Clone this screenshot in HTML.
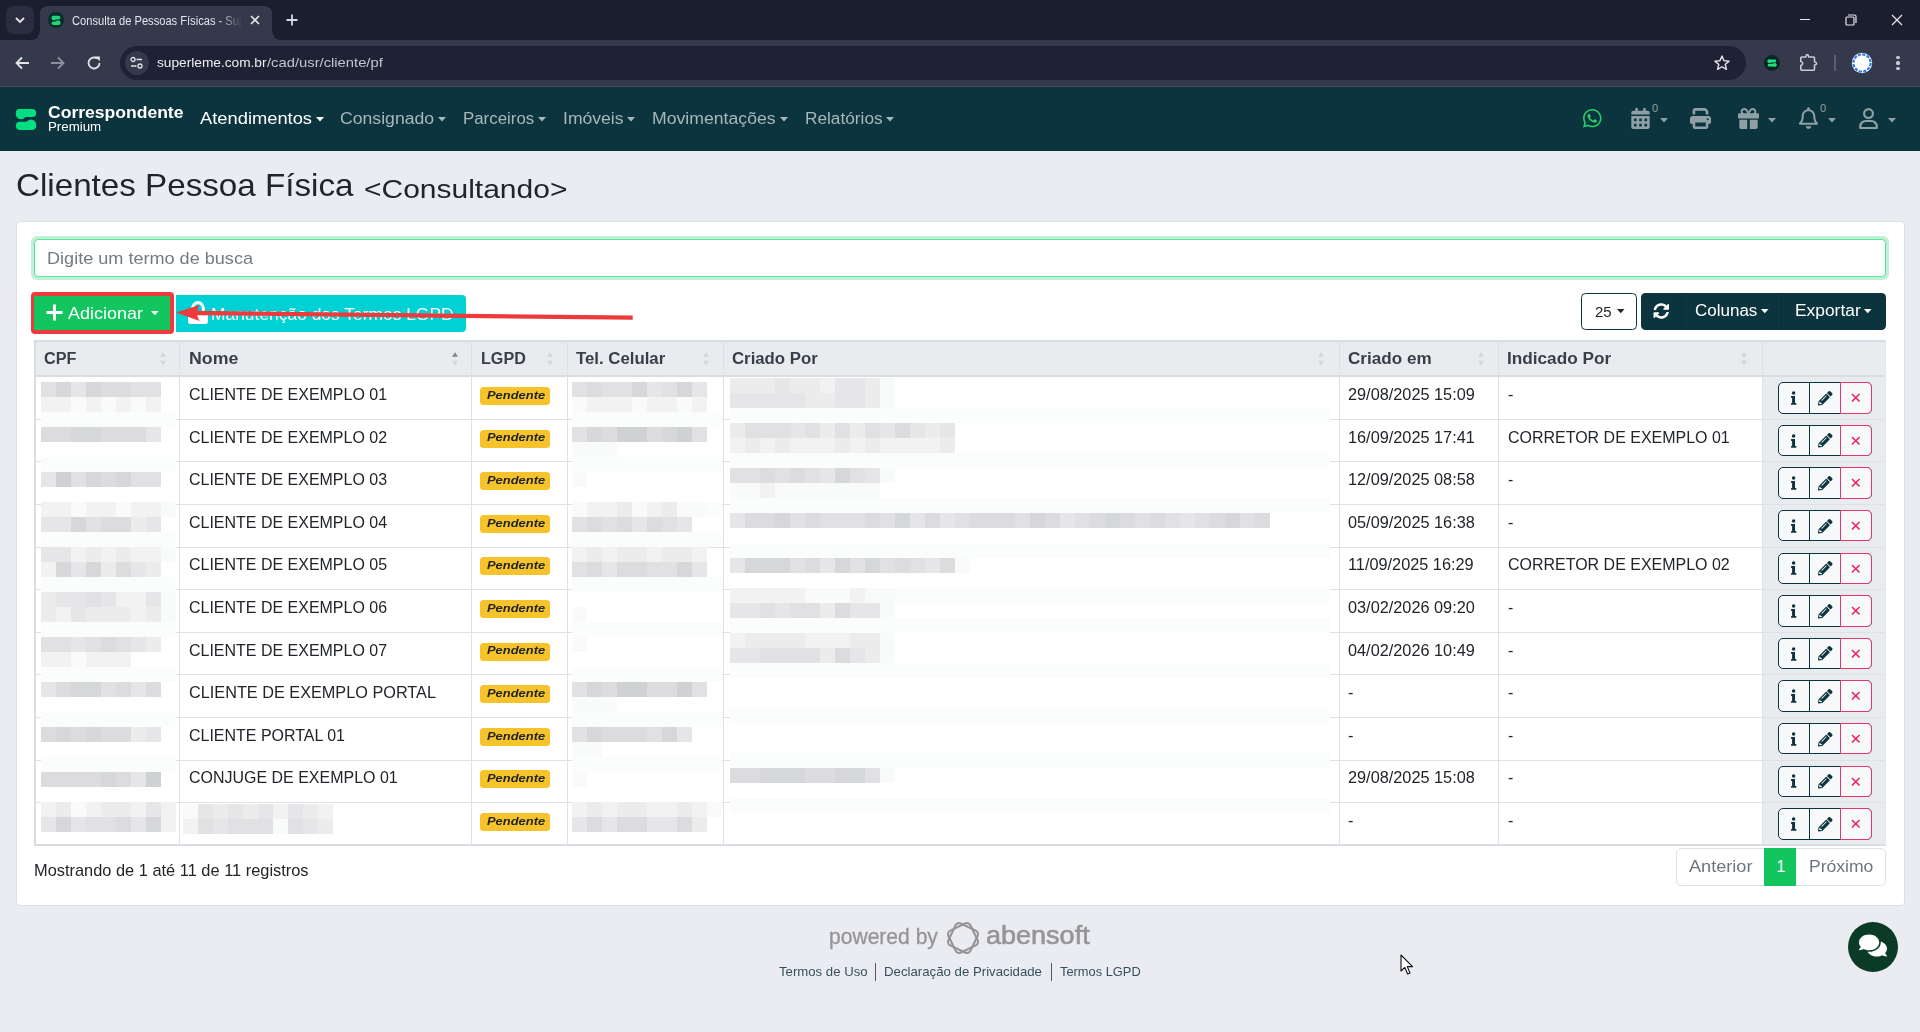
<!DOCTYPE html>
<html><head><meta charset="utf-8"><title>Consulta de Pessoas Físicas</title>
<style>
html,body{margin:0;padding:0;width:1920px;height:1032px;overflow:hidden;background:#ebecf1;font-family:"Liberation Sans",sans-serif;}
.a{position:absolute;box-sizing:border-box;}
.t{position:absolute;white-space:nowrap;transform-origin:0 0;font-family:"Liberation Sans",sans-serif;}
svg.a{overflow:visible}
</style></head><body>
<div class="a" style="left:0.00px;top:0.00px;width:1920.00px;height:40.00px;background:#1b1e2f;"></div>
<div class="a" style="left:0.00px;top:40.00px;width:1920.00px;height:46.00px;background:#35394c;"></div>
<div class="a" style="left:0.00px;top:86.00px;width:1920.00px;height:1.00px;background:#4a4b57;"></div>
<svg class="a" style="left:30px;top:0px" width="260" height="41" viewBox="0 0 260 41"><path d="M0 40 Q10 40 10 30 L10 14 Q10 6 18 6 L234 6 Q242 6 242 14 L242 30 Q242 40 252 40 Z" fill="#35394c"/></svg>
<div class="a" style="left:6.00px;top:6.00px;width:28.00px;height:28.00px;background:#2a2d3f;border-radius:8px;"></div>
<svg class="a" style="left:14px;top:15px" width="12" height="10" viewBox="0 0 12 10"><path d="M2 3 L6 7 L10 3" stroke="#e6e6ea" stroke-width="1.8" fill="none"/></svg>
<svg class="a" style="left:48px;top:12px" width="16" height="16" viewBox="0 0 16 16"><circle cx="8" cy="8" r="8" fill="#0c2e2a"/><rect x="3.6" y="3.8" width="8.8" height="3.6" rx="1.8" fill="#22d37a"/><circle cx="5.9" cy="6" r="2.3" fill="#22d37a"/><rect x="3.6" y="9.4" width="8.8" height="3.6" rx="1.8" fill="#22d37a"/><circle cx="10.1" cy="10.6" r="2.3" fill="#22d37a"/></svg>
<div class="a" style="left:72px;top:10px;width:172px;height:20px;overflow:hidden;-webkit-mask-image:linear-gradient(90deg,#000 146px,transparent 170px)"><span id="tabtitle" class="t" style="left:0;top:3.8px;font-size:12.5px;line-height:14px;color:#e4e5ea;transform:scaleX(0.89)">Consulta de Pessoas Físicas - Superleme</span></div>
<svg class="a" style="left:250px;top:15px" width="10" height="10" viewBox="0 0 10 10"><path d="M1 1 L9 9 M9 1 L1 9" stroke="#e6e6ea" stroke-width="1.6"/></svg>
<svg class="a" style="left:286px;top:14px" width="12" height="12" viewBox="0 0 12 12"><path d="M6 0.5 V11.5 M0.5 6 H11.5" stroke="#d5d8e4" stroke-width="1.8"/></svg>
<div class="a" style="left:1800.00px;top:19.00px;width:10.00px;height:1.20px;background:#e6e6ea;"></div>
<svg class="a" style="left:1845px;top:14px" width="12" height="12" viewBox="0 0 12 12"><rect x="1" y="3" width="8" height="8" rx="1" stroke="#e6e6ea" stroke-width="1.2" fill="none"/><path d="M3 1 H9.5 a1.5 1.5 0 0 1 1.5 1.5 V9" stroke="#e6e6ea" stroke-width="1.2" fill="none"/></svg>
<svg class="a" style="left:1891px;top:14px" width="12" height="12" viewBox="0 0 12 12"><path d="M1 1 L11 11 M11 1 L1 11" stroke="#e6e6ea" stroke-width="1.3"/></svg>
<svg class="a" style="left:14px;top:56px" width="16" height="14" viewBox="0 0 16 14"><path d="M15 7 H2.5 M8 1.5 L2.5 7 L8 12.5" stroke="#e3e3e8" stroke-width="1.8" fill="none"/></svg>
<svg class="a" style="left:50px;top:56px" width="16" height="14" viewBox="0 0 16 14"><path d="M1 7 H13.5 M8 1.5 L13.5 7 L8 12.5" stroke="#8d8f9c" stroke-width="1.8" fill="none"/></svg>
<svg class="a" style="left:86px;top:55px" width="16" height="16" viewBox="0 0 16 16"><path d="M13.5 8 A5.5 5.5 0 1 1 11.3 3.6" stroke="#e3e3e8" stroke-width="1.8" fill="none"/><path d="M9 1.5 H13.8 V6.3 Z" fill="#e3e3e8"/></svg>
<div class="a" style="left:120.00px;top:46.00px;width:1626.00px;height:34.00px;background:#1f2234;border-radius:17px;"></div>
<div class="a" style="left:125.00px;top:51.00px;width:24.00px;height:24.00px;background:#35394c;border-radius:12px;"></div>
<svg class="a" style="left:130px;top:56px" width="14" height="14" viewBox="0 0 14 14"><circle cx="3" cy="3.5" r="2" stroke="#e3e3e8" stroke-width="1.3" fill="none"/><path d="M6.5 3.5 H12 M1 10 H6.5" stroke="#e3e3e8" stroke-width="1.4"/><circle cx="10" cy="10" r="2" stroke="#e3e3e8" stroke-width="1.3" fill="none"/></svg>
<span id="t0" class="t" style="left:157.00px;top:56.47px;font-size:13.50px;line-height:13.50px;color:#eceef2;font-weight:400;transform:scaleX(1.0139);">superleme.com.br</span>
<span id="t1" class="t" style="left:267.00px;top:56.47px;font-size:13.50px;line-height:13.50px;color:#c3c6d0;font-weight:400;transform:scaleX(1.0943);">/cad/usr/cliente/pf</span>
<svg class="a" style="left:1713px;top:54px" width="18" height="18" viewBox="0 0 24 24"><path d="M12 2.8 L14.7 9 L21.4 9.5 L16.3 13.9 L17.9 20.5 L12 17 L6.1 20.5 L7.7 13.9 L2.6 9.5 L9.3 9 Z" stroke="#e3e3e8" stroke-width="1.9" fill="none" stroke-linejoin="round"/></svg>
<svg class="a" style="left:1764px;top:55px" width="16" height="16" viewBox="0 0 16 16"><circle cx="8" cy="8" r="7.9" fill="#0a2424"/><rect x="3.6" y="4.6" width="8.6" height="2.8" rx="1.4" fill="#1ee07e"/><circle cx="5.2" cy="6.2" r="1.8" fill="#1ee07e"/><rect x="3.8" y="8.8" width="8.6" height="2.8" rx="1.4" fill="#1ee07e"/><circle cx="10.8" cy="9.9" r="1.8" fill="#1ee07e"/></svg>
<svg class="a" style="left:1799px;top:53px" width="20" height="20" viewBox="0 0 20 20"><path d="M2.8 4 H6.8 Q7.2 1.6 8.3 1.6 Q9.4 1.6 9.8 4 H14.5 a1 1 0 0 1 1 1 V8.8 Q17.6 9.3 17.6 10.4 Q17.6 11.5 15.5 12 V16.2 a1 1 0 0 1 -1 1 H2.8 a1 1 0 0 1 -1 -1 V12.4 Q3.8 11.7 3.8 10.4 Q3.8 9.1 1.8 8.4 V5 a1 1 0 0 1 1 -1 Z" stroke="#c8cad8" stroke-width="1.6" fill="none" stroke-linejoin="round"/></svg>
<div class="a" style="left:1834.30px;top:55.00px;width:1.40px;height:16.00px;background:#5b5e70;"></div>
<svg class="a" style="left:1851px;top:52px" width="22" height="22" viewBox="0 0 22 22"><circle cx="11" cy="11" r="10.2" fill="#ffffff"/><circle cx="11" cy="11" r="8.6" stroke="#2f7de6" stroke-width="2.2" stroke-dasharray="3.2 1.3" fill="none"/><circle cx="11" cy="11" r="6.4" fill="#ffffff"/></svg>
<div class="a" style="left:1896.40px;top:55.80px;width:3.20px;height:3.20px;background:#c8cad8;border-radius:50%;"></div>
<div class="a" style="left:1896.40px;top:61.40px;width:3.20px;height:3.20px;background:#c8cad8;border-radius:50%;"></div>
<div class="a" style="left:1896.40px;top:67.00px;width:3.20px;height:3.20px;background:#c8cad8;border-radius:50%;"></div>
<div class="a" style="left:0.00px;top:87.00px;width:1920.00px;height:64.00px;background:#0c343e;"></div>
<svg class="a" style="left:0px;top:100px" width="50" height="40" viewBox="0 100 50 40"><rect x="15.8" y="108.9" width="20.4" height="8.2" rx="4.1" fill="#03de80"/><circle cx="21" cy="114" r="5.2" fill="#03de80"/><rect x="15.8" y="121.7" width="20.4" height="8.2" rx="4.1" fill="#03de80"/><circle cx="31" cy="124.8" r="5.2" fill="#03de80"/></svg>
<span id="t2" class="t" style="left:48.00px;top:104.22px;font-size:16.50px;line-height:16.50px;color:#ffffff;font-weight:700;transform:scaleX(1.0630);">Correspondente</span>
<span id="t3" class="t" style="left:48.00px;top:120.96px;font-size:12.80px;line-height:12.80px;color:#ffffff;font-weight:400;transform:scaleX(1.0392);">Premium</span>
<span id="t4" class="t" style="left:199.50px;top:111.22px;font-size:15.80px;line-height:15.80px;color:#ffffff;font-weight:400;transform:scaleX(1.1598);">Atendimentos</span>
<svg class="a" style="left:315.70px;top:117.00px" width="8.00" height="4.50" viewBox="0 0 8 4.5"><path d="M0 0H8L4 4.5Z" fill="#ffffff"/></svg>
<span id="t5" class="t" style="left:340.00px;top:111.22px;font-size:15.80px;line-height:15.80px;color:#a7b7ba;font-weight:400;transform:scaleX(1.1161);">Consignado</span>
<svg class="a" style="left:437.50px;top:117.00px" width="8.00" height="4.50" viewBox="0 0 8 4.5"><path d="M0 0H8L4 4.5Z" fill="#a7b7ba"/></svg>
<span id="t6" class="t" style="left:463.00px;top:111.22px;font-size:15.80px;line-height:15.80px;color:#a7b7ba;font-weight:400;transform:scaleX(1.0672);">Parceiros</span>
<svg class="a" style="left:538.00px;top:117.00px" width="8.00" height="4.50" viewBox="0 0 8 4.5"><path d="M0 0H8L4 4.5Z" fill="#a7b7ba"/></svg>
<span id="t7" class="t" style="left:563.00px;top:111.22px;font-size:15.80px;line-height:15.80px;color:#a7b7ba;font-weight:400;transform:scaleX(1.1111);">Imóveis</span>
<svg class="a" style="left:627.00px;top:117.00px" width="8.00" height="4.50" viewBox="0 0 8 4.5"><path d="M0 0H8L4 4.5Z" fill="#a7b7ba"/></svg>
<span id="t8" class="t" style="left:651.75px;top:111.22px;font-size:15.80px;line-height:15.80px;color:#a7b7ba;font-weight:400;transform:scaleX(1.1171);">Movimentações</span>
<svg class="a" style="left:779.50px;top:117.00px" width="8.00" height="4.50" viewBox="0 0 8 4.5"><path d="M0 0H8L4 4.5Z" fill="#a7b7ba"/></svg>
<span id="t9" class="t" style="left:804.50px;top:111.22px;font-size:15.80px;line-height:15.80px;color:#a7b7ba;font-weight:400;transform:scaleX(1.0915);">Relatórios</span>
<svg class="a" style="left:885.50px;top:117.00px" width="8.00" height="4.50" viewBox="0 0 8 4.5"><path d="M0 0H8L4 4.5Z" fill="#a7b7ba"/></svg>
<svg class="a" style="left:1583px;top:109px" width="18.5" height="18.5" viewBox="0 0 448 448"><path fill="#25d366" d="M380.9 65.1C339 23.1 283.2 0 223.9 0 101.5 0 1.9 99.6 1.9 222c0 39.1 10.2 77.3 29.6 111L0 448l117.7-30.9c32.4 17.7 68.9 27 106.1 27h.1c122.3 0 224.1-99.6 224.1-222 0-59.3-25.2-115-67.1-157zm-157 341.6c-33.2 0-65.7-8.9-94-25.7l-6.7-4-69.8 18.3L72 326.2l-4.4-7c-18.5-29.4-28.2-63.3-28.2-98.2 0-101.7 82.8-184.5 184.6-184.5 49.3 0 95.6 19.2 130.4 54.1 34.8 34.9 56.2 81.2 56.1 130.5 0 101.8-84.9 184.6-186.6 184.6zm101.2-138.2c-5.5-2.8-32.8-16.2-37.9-18-5.1-1.9-8.8-2.8-12.5 2.8-3.7 5.6-14.3 18-17.6 21.8-3.2 3.7-6.5 4.2-12 1.4-32.6-16.3-54-29.1-75.5-66-5.7-9.8 5.7-9.1 16.3-30.3 1.8-3.7.9-6.9-.5-9.7-1.4-2.8-12.5-30.1-17.1-41.2-4.5-10.8-9.1-9.3-12.5-9.5-3.2-.2-6.9-.2-10.6-.2-3.7 0-9.7 1.4-14.8 6.9-5.1 5.6-19.4 19-19.4 46.3 0 27.3 19.9 53.7 22.6 57.4 2.8 3.7 39.1 59.7 94.8 83.8 35.2 15.2 49 16.5 66.6 13.9 10.7-1.6 32.8-13.4 37.4-26.4 4.6-13 4.6-24.1 3.2-26.4-1.3-2.5-5-3.9-10.5-6.6z"/></svg>
<svg class="a" style="left:1631px;top:108px" width="19" height="21" viewBox="0 0 448 512"><path fill="#8fa0a4" d="M0 464c0 26.5 21.5 48 48 48h352c26.5 0 48-21.5 48-48V192H0v272zm320-196c0-6.6 5.4-12 12-12h40c6.6 0 12 5.4 12 12v40c0 6.6-5.4 12-12 12h-40c-6.6 0-12-5.4-12-12v-40zm0 128c0-6.6 5.4-12 12-12h40c6.6 0 12 5.4 12 12v40c0 6.6-5.4 12-12 12h-40c-6.6 0-12-5.4-12-12v-40zM192 268c0-6.6 5.4-12 12-12h40c6.6 0 12 5.4 12 12v40c0 6.6-5.4 12-12 12h-40c-6.6 0-12-5.4-12-12v-40zm0 128c0-6.6 5.4-12 12-12h40c6.6 0 12 5.4 12 12v40c0 6.6-5.4 12-12 12h-40c-6.6 0-12-5.4-12-12v-40zM64 268c0-6.6 5.4-12 12-12h40c6.6 0 12 5.4 12 12v40c0 6.6-5.4 12-12 12H76c-6.6 0-12-5.4-12-12v-40zm0 128c0-6.6 5.4-12 12-12h40c6.6 0 12 5.4 12 12v40c0 6.6-5.4 12-12 12H76c-6.6 0-12-5.4-12-12v-40zM400 64h-48V16c0-8.8-7.2-16-16-16h-32c-8.8 0-16 7.2-16 16v48H160V16c0-8.8-7.2-16-16-16h-32c-8.8 0-16 7.2-16 16v48H48C21.5 64 0 85.5 0 112v48h448v-48c0-26.5-21.5-48-48-48z"/></svg>
<span id="t10" class="t" style="left:1652.00px;top:103.18px;font-size:11.00px;line-height:11.00px;color:#8fa0a4;font-weight:400;">0</span>
<svg class="a" style="left:1660.00px;top:118.20px" width="8.00" height="4.50" viewBox="0 0 8 4.5"><path d="M0 0H8L4 4.5Z" fill="#8fa0a4"/></svg>
<svg class="a" style="left:1689.5px;top:108px" width="21" height="21" viewBox="0 0 512 512"><path fill="#8fa0a4" d="M128 0C92.7 0 64 28.7 64 64v96h64V64H354.7L384 93.3V160h64V93.3c0-17-6.7-33.3-18.7-45.3L400 18.7C388 6.7 371.7 0 354.7 0H128zM384 352v32 64H128V384 368 352H384zm64 32h32c17.7 0 32-14.3 32-32V256c0-35.3-28.7-64-64-64H64c-35.3 0-64 28.7-64 64v96c0 17.700 14.3 32 32 32H64v64c0 35.3 28.7 64 64 64H384c35.3 0 64-28.7 64-64V384zM432 248a24 24 0 1 1 0 48 24 24 0 1 1 0-48z"/></svg>
<svg class="a" style="left:1738px;top:108px" width="21" height="21" viewBox="0 0 512 512"><path fill="#8fa0a4" d="M190.5 68.8L225.3 128H224 152c-22.1 0-40-17.9-40-40s17.9-40 40-40h2.2c14.9 0 28.8 7.9 36.3 20.8zM64 88c0 14.4 3.5 28 9.6 40H32c-17.7 0-32 14.3-32 32v64c0 17.7 14.3 32 32 32H480c17.7 0 32-14.3 32-32V160c0-17.7-14.3-32-32-32H438.4c6.1-12 9.6-25.6 9.6-40c0-48.6-39.4-88-88-88h-2.2c-31.9 0-61.5 16.9-77.7 44.4L256 85.5l-24.1-41C215.700 16.9 186.1 0 154.2 0H152C103.4 0 64 39.4 64 88zm336 0c0 22.1-17.9 40-40 40H288h-1.3l34.8-59.2C329.1 55.9 342.9 48 357.8 48H360c22.1 0 40 17.9 40 40zM32 288V464c0 26.5 21.5 48 48 48H224V288H32zM288 512H432c26.5 0 48-21.5 48-48V288H288V512z"/></svg>
<svg class="a" style="left:1768.40px;top:118.20px" width="8.00" height="4.50" viewBox="0 0 8 4.5"><path d="M0 0H8L4 4.5Z" fill="#8fa0a4"/></svg>
<svg class="a" style="left:1799px;top:107px" width="19" height="22" viewBox="0 0 448 512"><path fill="#8fa0a4" d="M439.39 362.29c-19.32-20.76-55.47-51.99-55.47-154.29 0-77.7-54.48-139.9-127.94-155.16V32c0-17.67-14.32-32-31.98-32s-31.98 14.33-31.98 32v20.84C118.56 68.1 64.08 130.3 64.08 208c0 102.3-36.15 133.53-55.47 154.29-6 6.45-8.66 14.16-8.61 21.71.11 16.4 12.98 32 32.1 32h383.8c19.12 0 32-15.6 32.1-32 .05-7.55-2.61-15.27-8.61-21.71zM67.53 368c21.22-27.97 44.42-74.33 44.53-159.42 0-.2-.06-.38-.06-.58 0-61.86 50.14-112 112-112s112 50.14 112 112c0 .2-.06.38-.06.58.11 85.1 23.31 131.46 44.53 159.42H67.53zM224 512c35.32 0 63.97-28.65 63.97-64H160.03c0 35.35 28.65 64 63.97 64z"/></svg>
<span id="t11" class="t" style="left:1820.00px;top:103.18px;font-size:11.00px;line-height:11.00px;color:#8fa0a4;font-weight:400;">0</span>
<svg class="a" style="left:1828.00px;top:118.20px" width="8.00" height="4.50" viewBox="0 0 8 4.5"><path d="M0 0H8L4 4.5Z" fill="#8fa0a4"/></svg>
<svg class="a" style="left:1858.5px;top:108px" width="19" height="21" viewBox="0 0 19 21"><circle cx="9.5" cy="5.6" r="4.4" stroke="#8fa0a4" stroke-width="2.2" fill="none"/><path d="M1.2 20 V18.5 a5.5 5.5 0 0 1 5.5 -5.5 H12.3 a5.5 5.5 0 0 1 5.5 5.5 V20 Z" stroke="#8fa0a4" stroke-width="2.2" fill="none" stroke-linejoin="round"/></svg>
<svg class="a" style="left:1888.00px;top:118.20px" width="8.00" height="4.50" viewBox="0 0 8 4.5"><path d="M0 0H8L4 4.5Z" fill="#8fa0a4"/></svg>
<span id="t12" class="t" style="left:16.00px;top:169.10px;font-size:32.00px;line-height:32.00px;color:#212529;font-weight:400;transform:scaleX(1.0369);">Clientes Pessoa Física</span>
<span id="t13" class="t" style="left:364.00px;top:175.62px;font-size:26.30px;line-height:26.30px;color:#212529;font-weight:400;transform:scaleX(1.1404);">&lt;Consultando&gt;</span>
<div class="a" style="left:16.00px;top:221.00px;width:1889.00px;height:684.50px;background:#ffffff;border:1px solid #dcdfe4;border-radius:4px;"></div>
<div class="a" style="left:31.00px;top:236.00px;width:1858.00px;height:44.00px;background:#c3efd9;border-radius:6px;"></div>
<div class="a" style="left:34.00px;top:239.00px;width:1852.00px;height:38.00px;background:#ffffff;border:1px solid #50e894;border-radius:4px;"></div>
<span id="t14" class="t" style="left:47.00px;top:249.88px;font-size:16.20px;line-height:16.20px;color:#727a82;font-weight:400;transform:scaleX(1.1168);">Digite um termo de busca</span>
<div class="a" style="left:30.50px;top:291.50px;width:143.00px;height:42.00px;background:#ee3a3d;border-radius:4px;"></div>
<div class="a" style="left:34.00px;top:295.50px;width:136.00px;height:34.50px;background:#12c55f;border-radius:1px;"></div>
<svg class="a" style="left:46px;top:304px" width="17" height="17" viewBox="0 0 17 17"><path d="M8.5 0.5 V16.5 M0.5 8.5 H16.5" stroke="#fff" stroke-width="3"/></svg>
<span id="t15" class="t" style="left:68.40px;top:305.11px;font-size:16.40px;line-height:16.40px;color:#ffffff;font-weight:400;transform:scaleX(1.0971);">Adicionar</span>
<svg class="a" style="left:151.40px;top:311.20px" width="7.60" height="4.30" viewBox="0 0 8 4.5"><path d="M0 0H8L4 4.5Z" fill="#ffffff"/></svg>
<div class="a" style="left:176.00px;top:295.00px;width:289.50px;height:37.00px;background:#00d1d5;border-radius:0 4px 4px 0;"></div>
<svg class="a" style="left:188px;top:300px" width="20" height="25" viewBox="0 0 448 512"><path fill="#fff" d="M400 240h-24v-72C376 75 299 0 224 0S72 75 72 168v32h64v-32c0-48 40-96 88-96s88 48 88 96v72H48c-26.5 0-48 21.5-48 48v176c0 26.5 21.5 48 48 48h352c26.5 0 48-21.5 48-48V288c0-26.5-21.5-48-48-48z"/></svg>
<span id="t16" class="t" style="left:210.80px;top:305.61px;font-size:16.40px;line-height:16.40px;color:#ffffff;font-weight:400;transform:scaleX(1.0623);">Manutenção dos Termos LGPD</span>
<div class="a" style="left:1581.00px;top:293.30px;width:55.50px;height:36.30px;background:#ffffff;border:1px solid #0c343e;border-radius:4.5px;"></div>
<span id="t17" class="t" style="left:1594.50px;top:303.76px;font-size:15.40px;line-height:15.40px;color:#212529;font-weight:400;transform:scaleX(0.9706);">25</span>
<svg class="a" style="left:1617.00px;top:309.20px" width="7.50" height="4.20" viewBox="0 0 8 4.5"><path d="M0 0H8L4 4.5Z" fill="#212529"/></svg>
<div class="a" style="left:1641.00px;top:293.30px;width:244.80px;height:36.30px;background:#0c343e;border-radius:4.5px;"></div>
<div class="a" style="left:1681.00px;top:293.30px;width:1.00px;height:36.30px;background:#0a2e37;"></div>
<div class="a" style="left:1781.40px;top:293.30px;width:1.00px;height:36.30px;background:#0a2e37;"></div>
<svg class="a" style="left:1653px;top:303px" width="16.5" height="16" viewBox="0 0 512 512"><path fill="#fff" d="M370.72 133.28C339.458 104.008 298.888 87.962 255.848 88c-77.458.068-144.328 53.178-162.791 126.85-1.344 5.363-6.122 9.15-11.651 9.15H24.103c-7.498 0-13.194-6.807-11.807-14.176C33.933 94.924 134.813 8 256 8c66.448 0 126.791 26.136 171.315 68.685L463.03 40.97C478.149 25.851 504 36.559 504 57.941V192c0 13.255-10.745 24-24 24H345.941c-21.382 0-32.09-25.851-16.971-40.971l41.75-41.749zM32 296h134.059c21.382 0 32.09 25.851 16.971 40.971l-41.75 41.75c31.262 29.273 71.835 45.319 114.876 45.28 77.418-.07 144.315-53.144 162.787-126.849 1.344-5.363 6.122-9.15 11.651-9.15h57.304c7.498 0 13.194 6.807 11.807 14.176C478.067 417.076 377.187 504 256 504c-66.448 0-126.791-26.136-171.315-68.685L48.97 471.03C33.851 486.149 8 475.441 8 454.059V320c0-13.255 10.745-24 24-24z"/></svg>
<span id="t18" class="t" style="left:1694.60px;top:303.42px;font-size:15.80px;line-height:15.80px;color:#ffffff;font-weight:400;transform:scaleX(1.0759);">Colunas</span>
<svg class="a" style="left:1760.50px;top:309.20px" width="7.50" height="4.20" viewBox="0 0 8 4.5"><path d="M0 0H8L4 4.5Z" fill="#ffffff"/></svg>
<span id="t19" class="t" style="left:1795.00px;top:303.42px;font-size:15.80px;line-height:15.80px;color:#ffffff;font-weight:400;transform:scaleX(1.1000);">Exportar</span>
<svg class="a" style="left:1864.00px;top:309.20px" width="7.50" height="4.20" viewBox="0 0 8 4.5"><path d="M0 0H8L4 4.5Z" fill="#ffffff"/></svg>
<div class="a" style="left:34.00px;top:340.00px;width:1851.60px;height:1.60px;background:#d9dde2;"></div>
<div class="a" style="left:34.00px;top:341.60px;width:1851.60px;height:33.60px;background:#e9ecef;"></div>
<div class="a" style="left:34.00px;top:375.20px;width:1851.60px;height:1.80px;background:#d9dde2;"></div>
<div class="a" style="left:1762.20px;top:377.00px;width:123.40px;height:468.30px;background:#e9ecef;"></div>
<div class="a" style="left:34.00px;top:419.00px;width:1851.60px;height:1.00px;background:#dee2e6;"></div>
<div class="a" style="left:34.00px;top:461.00px;width:1851.60px;height:1.00px;background:#dee2e6;"></div>
<div class="a" style="left:34.00px;top:504.00px;width:1851.60px;height:1.00px;background:#dee2e6;"></div>
<div class="a" style="left:34.00px;top:547.00px;width:1851.60px;height:1.00px;background:#dee2e6;"></div>
<div class="a" style="left:34.00px;top:589.00px;width:1851.60px;height:1.00px;background:#dee2e6;"></div>
<div class="a" style="left:34.00px;top:632.00px;width:1851.60px;height:1.00px;background:#dee2e6;"></div>
<div class="a" style="left:34.00px;top:674.00px;width:1851.60px;height:1.00px;background:#dee2e6;"></div>
<div class="a" style="left:34.00px;top:717.00px;width:1851.60px;height:1.00px;background:#dee2e6;"></div>
<div class="a" style="left:34.00px;top:760.00px;width:1851.60px;height:1.00px;background:#dee2e6;"></div>
<div class="a" style="left:34.00px;top:802.00px;width:1851.60px;height:1.00px;background:#dee2e6;"></div>
<div class="a" style="left:34.00px;top:844.00px;width:1851.60px;height:1.60px;background:#d9dde2;"></div>
<div class="a" style="left:34.00px;top:340.00px;width:1.80px;height:505.60px;background:#d9dde2;"></div>
<div class="a" style="left:178.80px;top:341.60px;width:1.10px;height:503.70px;background:#dee2e6;"></div>
<div class="a" style="left:470.80px;top:341.60px;width:1.10px;height:503.70px;background:#dee2e6;"></div>
<div class="a" style="left:567.00px;top:341.60px;width:1.10px;height:503.70px;background:#dee2e6;"></div>
<div class="a" style="left:723.20px;top:341.60px;width:1.10px;height:503.70px;background:#dee2e6;"></div>
<div class="a" style="left:1338.70px;top:341.60px;width:1.10px;height:503.70px;background:#dee2e6;"></div>
<div class="a" style="left:1497.90px;top:341.60px;width:1.10px;height:503.70px;background:#dee2e6;"></div>
<div class="a" style="left:1761.70px;top:341.60px;width:1.10px;height:503.70px;background:#dee2e6;"></div>
<div class="a" style="left:1884.60px;top:340.00px;width:1.20px;height:505.30px;background:#e3e6ea;"></div>
<span id="t20" class="t" style="left:44.00px;top:350.69px;font-size:15.60px;line-height:15.60px;color:#383f48;font-weight:700;transform:scaleX(1.0387);">CPF</span>
<svg class="a" style="left:160.0px;top:351.8px" width="6" height="14" viewBox="0 0 6 14"><path d="M0 4.8 L3 0.2 L6 4.8Z" fill="#d2d6da"/><path d="M0 8.8 L3 13.3 L6 8.8Z" fill="#d2d6da"/></svg>
<span id="t21" class="t" style="left:188.80px;top:350.69px;font-size:15.60px;line-height:15.60px;color:#383f48;font-weight:700;transform:scaleX(1.1372);">Nome</span>
<svg class="a" style="left:452.0px;top:351.8px" width="6" height="14" viewBox="0 0 6 14"><path d="M0 4.8 L3 0.2 L6 4.8Z" fill="#7d848b"/><path d="M0 8.8 L3 13.3 L6 8.8Z" fill="#d2d6da"/></svg>
<span id="t22" class="t" style="left:480.50px;top:350.69px;font-size:15.60px;line-height:15.60px;color:#383f48;font-weight:700;transform:scaleX(1.0349);">LGPD</span>
<svg class="a" style="left:547.0px;top:351.8px" width="6" height="14" viewBox="0 0 6 14"><path d="M0 4.8 L3 0.2 L6 4.8Z" fill="#d2d6da"/><path d="M0 8.8 L3 13.3 L6 8.8Z" fill="#d2d6da"/></svg>
<span id="t23" class="t" style="left:576.00px;top:350.69px;font-size:15.60px;line-height:15.60px;color:#383f48;font-weight:700;transform:scaleX(1.0759);">Tel. Celular</span>
<svg class="a" style="left:703.0px;top:351.8px" width="6" height="14" viewBox="0 0 6 14"><path d="M0 4.8 L3 0.2 L6 4.8Z" fill="#d2d6da"/><path d="M0 8.8 L3 13.3 L6 8.8Z" fill="#d2d6da"/></svg>
<span id="t24" class="t" style="left:732.00px;top:350.69px;font-size:15.60px;line-height:15.60px;color:#383f48;font-weight:700;transform:scaleX(1.0750);">Criado Por</span>
<svg class="a" style="left:1318.0px;top:351.8px" width="6" height="14" viewBox="0 0 6 14"><path d="M0 4.8 L3 0.2 L6 4.8Z" fill="#d2d6da"/><path d="M0 8.8 L3 13.3 L6 8.8Z" fill="#d2d6da"/></svg>
<span id="t25" class="t" style="left:1347.50px;top:350.69px;font-size:15.60px;line-height:15.60px;color:#383f48;font-weight:700;transform:scaleX(1.0961);">Criado em</span>
<svg class="a" style="left:1478.0px;top:351.8px" width="6" height="14" viewBox="0 0 6 14"><path d="M0 4.8 L3 0.2 L6 4.8Z" fill="#d2d6da"/><path d="M0 8.8 L3 13.3 L6 8.8Z" fill="#d2d6da"/></svg>
<span id="t26" class="t" style="left:1507.00px;top:350.69px;font-size:15.60px;line-height:15.60px;color:#383f48;font-weight:700;transform:scaleX(1.1021);">Indicado Por</span>
<svg class="a" style="left:1741.0px;top:351.8px" width="6" height="14" viewBox="0 0 6 14"><path d="M0 4.8 L3 0.2 L6 4.8Z" fill="#d2d6da"/><path d="M0 8.8 L3 13.3 L6 8.8Z" fill="#d2d6da"/></svg>
<span id="t27" class="t" style="left:188.70px;top:386.01px;font-size:16.40px;line-height:16.40px;color:#212529;font-weight:400;transform:scaleX(0.9749);">CLIENTE DE EXEMPLO 01</span>
<span id="t28" class="t" style="left:1347.80px;top:386.01px;font-size:16.40px;line-height:16.40px;color:#212529;font-weight:400;transform:scaleX(0.9938);">29/08/2025 15:09</span>
<span id="t29" class="t" style="left:1507.60px;top:386.01px;font-size:16.40px;line-height:16.40px;color:#212529;font-weight:400;transform:scaleX(0.9749);">-</span>
<div class="a" style="left:480.00px;top:387.00px;width:69.70px;height:18.00px;background:#f6c32b;border-radius:3.5px;"></div>
<span id="t30" class="t" style="left:487.20px;top:389.83px;font-size:11.30px;line-height:11.30px;color:#212529;font-weight:700;font-style:italic;transform:scaleX(1.1431);">Pendente</span>
<div class="a" style="left:1778px;top:382.10px;width:94px;height:31.6px;background:#f8f9fa;border:1.4px solid #0c343e;border-radius:5px;"></div>
<div class="a" style="left:1840.2px;top:382.10px;width:31.8px;height:31.6px;border:1.4px solid #e8336b;border-radius:0 5px 5px 0;background:#f8f9fa"></div>
<div class="a" style="left:1808.90px;top:382.10px;width:1.40px;height:31.60px;background:#0c343e;"></div>
<svg class="a" style="left:1790px;top:390.00px" width="8" height="16" viewBox="0 0 8 16"><circle cx="3.6" cy="2.9" r="1.75" fill="#0c343e"/><path d="M1.1 6 H5 V12.9 H6.3 V14.75 H1.1 V12.9 H2.1 V8 H1.1 Z" fill="#0c343e"/></svg>
<svg class="a" style="left:1818px;top:390.80px" width="14.5" height="14.5" viewBox="0 0 512 512"><path fill="#0c343e" d="M497.9 142.1l-46.1 46.1c-4.7 4.7-12.3 4.7-17 0l-111-111c-4.7-4.7-4.7-12.3 0-17l46.1-46.1c18.7-18.7 49.1-18.7 67.9 0l60.1 60.1c18.8 18.7 18.8 49.1 0 67.9zM284.2 99.8L21.6 362.4.4 483.9c-2.9 16.4 11.4 30.6 27.8 27.8l121.5-21.3 262.6-262.6c4.7-4.7 4.7-12.3 0-17l-111-111c-4.8-4.7-12.4-4.7-17.1 0zM124.1 339.9c-5.5-5.5-5.5-14.3 0-19.8l154-154c5.5-5.5 14.3-5.5 19.8 0s5.5 14.3 0 19.8l-154 154c-5.5 5.5-14.3 5.5-19.8 0zM88 424h48v36.3l-64.5 11.3-31.1-31.1L51.7 376H88v48z"/></svg>
<svg class="a" style="left:1851px;top:393.20px" width="9.5" height="9.5" viewBox="0 0 10 10"><path d="M1 1 L9 9 M9 1 L1 9" stroke="#e8285c" stroke-width="1.7"/></svg>
<span id="t31" class="t" style="left:188.70px;top:428.61px;font-size:16.40px;line-height:16.40px;color:#212529;font-weight:400;transform:scaleX(0.9749);">CLIENTE DE EXEMPLO 02</span>
<span id="t32" class="t" style="left:1347.80px;top:428.61px;font-size:16.40px;line-height:16.40px;color:#212529;font-weight:400;transform:scaleX(0.9938);">16/09/2025 17:41</span>
<span id="t33" class="t" style="left:1507.60px;top:428.61px;font-size:16.40px;line-height:16.40px;color:#212529;font-weight:400;transform:scaleX(0.9749);">CORRETOR DE EXEMPLO 01</span>
<div class="a" style="left:480.00px;top:429.60px;width:69.70px;height:18.00px;background:#f6c32b;border-radius:3.5px;"></div>
<span id="t34" class="t" style="left:487.20px;top:432.43px;font-size:11.30px;line-height:11.30px;color:#212529;font-weight:700;font-style:italic;transform:scaleX(1.1431);">Pendente</span>
<div class="a" style="left:1778px;top:424.70px;width:94px;height:31.6px;background:#f8f9fa;border:1.4px solid #0c343e;border-radius:5px;"></div>
<div class="a" style="left:1840.2px;top:424.70px;width:31.8px;height:31.6px;border:1.4px solid #e8336b;border-radius:0 5px 5px 0;background:#f8f9fa"></div>
<div class="a" style="left:1808.90px;top:424.70px;width:1.40px;height:31.60px;background:#0c343e;"></div>
<svg class="a" style="left:1790px;top:432.60px" width="8" height="16" viewBox="0 0 8 16"><circle cx="3.6" cy="2.9" r="1.75" fill="#0c343e"/><path d="M1.1 6 H5 V12.9 H6.3 V14.75 H1.1 V12.9 H2.1 V8 H1.1 Z" fill="#0c343e"/></svg>
<svg class="a" style="left:1818px;top:433.40px" width="14.5" height="14.5" viewBox="0 0 512 512"><path fill="#0c343e" d="M497.9 142.1l-46.1 46.1c-4.7 4.7-12.3 4.7-17 0l-111-111c-4.7-4.7-4.7-12.3 0-17l46.1-46.1c18.7-18.7 49.1-18.7 67.9 0l60.1 60.1c18.8 18.7 18.8 49.1 0 67.9zM284.2 99.8L21.6 362.4.4 483.9c-2.9 16.4 11.4 30.6 27.8 27.8l121.5-21.3 262.6-262.6c4.7-4.7 4.7-12.3 0-17l-111-111c-4.8-4.7-12.4-4.7-17.1 0zM124.1 339.9c-5.5-5.5-5.5-14.3 0-19.8l154-154c5.5-5.5 14.3-5.5 19.8 0s5.5 14.3 0 19.8l-154 154c-5.5 5.5-14.3 5.5-19.8 0zM88 424h48v36.3l-64.5 11.3-31.1-31.1L51.7 376H88v48z"/></svg>
<svg class="a" style="left:1851px;top:435.80px" width="9.5" height="9.5" viewBox="0 0 10 10"><path d="M1 1 L9 9 M9 1 L1 9" stroke="#e8285c" stroke-width="1.7"/></svg>
<span id="t35" class="t" style="left:188.70px;top:471.21px;font-size:16.40px;line-height:16.40px;color:#212529;font-weight:400;transform:scaleX(0.9749);">CLIENTE DE EXEMPLO 03</span>
<span id="t36" class="t" style="left:1347.80px;top:471.21px;font-size:16.40px;line-height:16.40px;color:#212529;font-weight:400;transform:scaleX(0.9938);">12/09/2025 08:58</span>
<span id="t37" class="t" style="left:1507.60px;top:471.21px;font-size:16.40px;line-height:16.40px;color:#212529;font-weight:400;transform:scaleX(0.9749);">-</span>
<div class="a" style="left:480.00px;top:472.20px;width:69.70px;height:18.00px;background:#f6c32b;border-radius:3.5px;"></div>
<span id="t38" class="t" style="left:487.20px;top:475.03px;font-size:11.30px;line-height:11.30px;color:#212529;font-weight:700;font-style:italic;transform:scaleX(1.1431);">Pendente</span>
<div class="a" style="left:1778px;top:467.30px;width:94px;height:31.6px;background:#f8f9fa;border:1.4px solid #0c343e;border-radius:5px;"></div>
<div class="a" style="left:1840.2px;top:467.30px;width:31.8px;height:31.6px;border:1.4px solid #e8336b;border-radius:0 5px 5px 0;background:#f8f9fa"></div>
<div class="a" style="left:1808.90px;top:467.30px;width:1.40px;height:31.60px;background:#0c343e;"></div>
<svg class="a" style="left:1790px;top:475.20px" width="8" height="16" viewBox="0 0 8 16"><circle cx="3.6" cy="2.9" r="1.75" fill="#0c343e"/><path d="M1.1 6 H5 V12.9 H6.3 V14.75 H1.1 V12.9 H2.1 V8 H1.1 Z" fill="#0c343e"/></svg>
<svg class="a" style="left:1818px;top:476.00px" width="14.5" height="14.5" viewBox="0 0 512 512"><path fill="#0c343e" d="M497.9 142.1l-46.1 46.1c-4.7 4.7-12.3 4.7-17 0l-111-111c-4.7-4.7-4.7-12.3 0-17l46.1-46.1c18.7-18.7 49.1-18.7 67.9 0l60.1 60.1c18.8 18.7 18.8 49.1 0 67.9zM284.2 99.8L21.6 362.4.4 483.9c-2.9 16.4 11.4 30.6 27.8 27.8l121.5-21.3 262.6-262.6c4.7-4.7 4.7-12.3 0-17l-111-111c-4.8-4.7-12.4-4.7-17.1 0zM124.1 339.9c-5.5-5.5-5.5-14.3 0-19.8l154-154c5.5-5.5 14.3-5.5 19.8 0s5.5 14.3 0 19.8l-154 154c-5.5 5.5-14.3 5.5-19.8 0zM88 424h48v36.3l-64.5 11.3-31.1-31.1L51.7 376H88v48z"/></svg>
<svg class="a" style="left:1851px;top:478.40px" width="9.5" height="9.5" viewBox="0 0 10 10"><path d="M1 1 L9 9 M9 1 L1 9" stroke="#e8285c" stroke-width="1.7"/></svg>
<span id="t39" class="t" style="left:188.70px;top:513.81px;font-size:16.40px;line-height:16.40px;color:#212529;font-weight:400;transform:scaleX(0.9749);">CLIENTE DE EXEMPLO 04</span>
<span id="t40" class="t" style="left:1347.80px;top:513.81px;font-size:16.40px;line-height:16.40px;color:#212529;font-weight:400;transform:scaleX(0.9938);">05/09/2025 16:38</span>
<span id="t41" class="t" style="left:1507.60px;top:513.81px;font-size:16.40px;line-height:16.40px;color:#212529;font-weight:400;transform:scaleX(0.9749);">-</span>
<div class="a" style="left:480.00px;top:514.80px;width:69.70px;height:18.00px;background:#f6c32b;border-radius:3.5px;"></div>
<span id="t42" class="t" style="left:487.20px;top:517.63px;font-size:11.30px;line-height:11.30px;color:#212529;font-weight:700;font-style:italic;transform:scaleX(1.1431);">Pendente</span>
<div class="a" style="left:1778px;top:509.90px;width:94px;height:31.6px;background:#f8f9fa;border:1.4px solid #0c343e;border-radius:5px;"></div>
<div class="a" style="left:1840.2px;top:509.90px;width:31.8px;height:31.6px;border:1.4px solid #e8336b;border-radius:0 5px 5px 0;background:#f8f9fa"></div>
<div class="a" style="left:1808.90px;top:509.90px;width:1.40px;height:31.60px;background:#0c343e;"></div>
<svg class="a" style="left:1790px;top:517.80px" width="8" height="16" viewBox="0 0 8 16"><circle cx="3.6" cy="2.9" r="1.75" fill="#0c343e"/><path d="M1.1 6 H5 V12.9 H6.3 V14.75 H1.1 V12.9 H2.1 V8 H1.1 Z" fill="#0c343e"/></svg>
<svg class="a" style="left:1818px;top:518.60px" width="14.5" height="14.5" viewBox="0 0 512 512"><path fill="#0c343e" d="M497.9 142.1l-46.1 46.1c-4.7 4.7-12.3 4.7-17 0l-111-111c-4.7-4.7-4.7-12.3 0-17l46.1-46.1c18.7-18.7 49.1-18.7 67.9 0l60.1 60.1c18.8 18.7 18.8 49.1 0 67.9zM284.2 99.8L21.6 362.4.4 483.9c-2.9 16.4 11.4 30.6 27.8 27.8l121.5-21.3 262.6-262.6c4.7-4.7 4.7-12.3 0-17l-111-111c-4.8-4.7-12.4-4.7-17.1 0zM124.1 339.9c-5.5-5.5-5.5-14.3 0-19.8l154-154c5.5-5.5 14.3-5.5 19.8 0s5.5 14.3 0 19.8l-154 154c-5.5 5.5-14.3 5.5-19.8 0zM88 424h48v36.3l-64.5 11.3-31.1-31.1L51.7 376H88v48z"/></svg>
<svg class="a" style="left:1851px;top:521.00px" width="9.5" height="9.5" viewBox="0 0 10 10"><path d="M1 1 L9 9 M9 1 L1 9" stroke="#e8285c" stroke-width="1.7"/></svg>
<span id="t43" class="t" style="left:188.70px;top:556.41px;font-size:16.40px;line-height:16.40px;color:#212529;font-weight:400;transform:scaleX(0.9749);">CLIENTE DE EXEMPLO 05</span>
<span id="t44" class="t" style="left:1347.80px;top:556.41px;font-size:16.40px;line-height:16.40px;color:#212529;font-weight:400;transform:scaleX(0.9938);">11/09/2025 16:29</span>
<span id="t45" class="t" style="left:1507.60px;top:556.41px;font-size:16.40px;line-height:16.40px;color:#212529;font-weight:400;transform:scaleX(0.9749);">CORRETOR DE EXEMPLO 02</span>
<div class="a" style="left:480.00px;top:557.40px;width:69.70px;height:18.00px;background:#f6c32b;border-radius:3.5px;"></div>
<span id="t46" class="t" style="left:487.20px;top:560.23px;font-size:11.30px;line-height:11.30px;color:#212529;font-weight:700;font-style:italic;transform:scaleX(1.1431);">Pendente</span>
<div class="a" style="left:1778px;top:552.50px;width:94px;height:31.6px;background:#f8f9fa;border:1.4px solid #0c343e;border-radius:5px;"></div>
<div class="a" style="left:1840.2px;top:552.50px;width:31.8px;height:31.6px;border:1.4px solid #e8336b;border-radius:0 5px 5px 0;background:#f8f9fa"></div>
<div class="a" style="left:1808.90px;top:552.50px;width:1.40px;height:31.60px;background:#0c343e;"></div>
<svg class="a" style="left:1790px;top:560.40px" width="8" height="16" viewBox="0 0 8 16"><circle cx="3.6" cy="2.9" r="1.75" fill="#0c343e"/><path d="M1.1 6 H5 V12.9 H6.3 V14.75 H1.1 V12.9 H2.1 V8 H1.1 Z" fill="#0c343e"/></svg>
<svg class="a" style="left:1818px;top:561.20px" width="14.5" height="14.5" viewBox="0 0 512 512"><path fill="#0c343e" d="M497.9 142.1l-46.1 46.1c-4.7 4.7-12.3 4.7-17 0l-111-111c-4.7-4.7-4.7-12.3 0-17l46.1-46.1c18.7-18.7 49.1-18.7 67.9 0l60.1 60.1c18.8 18.7 18.8 49.1 0 67.9zM284.2 99.8L21.6 362.4.4 483.9c-2.9 16.4 11.4 30.6 27.8 27.8l121.5-21.3 262.6-262.6c4.7-4.7 4.7-12.3 0-17l-111-111c-4.8-4.7-12.4-4.7-17.1 0zM124.1 339.9c-5.5-5.5-5.5-14.3 0-19.8l154-154c5.5-5.5 14.3-5.5 19.8 0s5.5 14.3 0 19.8l-154 154c-5.5 5.5-14.3 5.5-19.8 0zM88 424h48v36.3l-64.5 11.3-31.1-31.1L51.7 376H88v48z"/></svg>
<svg class="a" style="left:1851px;top:563.60px" width="9.5" height="9.5" viewBox="0 0 10 10"><path d="M1 1 L9 9 M9 1 L1 9" stroke="#e8285c" stroke-width="1.7"/></svg>
<span id="t47" class="t" style="left:188.70px;top:599.01px;font-size:16.40px;line-height:16.40px;color:#212529;font-weight:400;transform:scaleX(0.9749);">CLIENTE DE EXEMPLO 06</span>
<span id="t48" class="t" style="left:1347.80px;top:599.01px;font-size:16.40px;line-height:16.40px;color:#212529;font-weight:400;transform:scaleX(0.9938);">03/02/2026 09:20</span>
<span id="t49" class="t" style="left:1507.60px;top:599.01px;font-size:16.40px;line-height:16.40px;color:#212529;font-weight:400;transform:scaleX(0.9749);">-</span>
<div class="a" style="left:480.00px;top:600.00px;width:69.70px;height:18.00px;background:#f6c32b;border-radius:3.5px;"></div>
<span id="t50" class="t" style="left:487.20px;top:602.83px;font-size:11.30px;line-height:11.30px;color:#212529;font-weight:700;font-style:italic;transform:scaleX(1.1431);">Pendente</span>
<div class="a" style="left:1778px;top:595.10px;width:94px;height:31.6px;background:#f8f9fa;border:1.4px solid #0c343e;border-radius:5px;"></div>
<div class="a" style="left:1840.2px;top:595.10px;width:31.8px;height:31.6px;border:1.4px solid #e8336b;border-radius:0 5px 5px 0;background:#f8f9fa"></div>
<div class="a" style="left:1808.90px;top:595.10px;width:1.40px;height:31.60px;background:#0c343e;"></div>
<svg class="a" style="left:1790px;top:603.00px" width="8" height="16" viewBox="0 0 8 16"><circle cx="3.6" cy="2.9" r="1.75" fill="#0c343e"/><path d="M1.1 6 H5 V12.9 H6.3 V14.75 H1.1 V12.9 H2.1 V8 H1.1 Z" fill="#0c343e"/></svg>
<svg class="a" style="left:1818px;top:603.80px" width="14.5" height="14.5" viewBox="0 0 512 512"><path fill="#0c343e" d="M497.9 142.1l-46.1 46.1c-4.7 4.7-12.3 4.7-17 0l-111-111c-4.7-4.7-4.7-12.3 0-17l46.1-46.1c18.7-18.7 49.1-18.7 67.9 0l60.1 60.1c18.8 18.7 18.8 49.1 0 67.9zM284.2 99.8L21.6 362.4.4 483.9c-2.9 16.4 11.4 30.6 27.8 27.8l121.5-21.3 262.6-262.6c4.7-4.7 4.7-12.3 0-17l-111-111c-4.8-4.7-12.4-4.7-17.1 0zM124.1 339.9c-5.5-5.5-5.5-14.3 0-19.8l154-154c5.5-5.5 14.3-5.5 19.8 0s5.5 14.3 0 19.8l-154 154c-5.5 5.5-14.3 5.5-19.8 0zM88 424h48v36.3l-64.5 11.3-31.1-31.1L51.7 376H88v48z"/></svg>
<svg class="a" style="left:1851px;top:606.20px" width="9.5" height="9.5" viewBox="0 0 10 10"><path d="M1 1 L9 9 M9 1 L1 9" stroke="#e8285c" stroke-width="1.7"/></svg>
<span id="t51" class="t" style="left:188.70px;top:641.61px;font-size:16.40px;line-height:16.40px;color:#212529;font-weight:400;transform:scaleX(0.9749);">CLIENTE DE EXEMPLO 07</span>
<span id="t52" class="t" style="left:1347.80px;top:641.61px;font-size:16.40px;line-height:16.40px;color:#212529;font-weight:400;transform:scaleX(0.9938);">04/02/2026 10:49</span>
<span id="t53" class="t" style="left:1507.60px;top:641.61px;font-size:16.40px;line-height:16.40px;color:#212529;font-weight:400;transform:scaleX(0.9749);">-</span>
<div class="a" style="left:480.00px;top:642.60px;width:69.70px;height:18.00px;background:#f6c32b;border-radius:3.5px;"></div>
<span id="t54" class="t" style="left:487.20px;top:645.43px;font-size:11.30px;line-height:11.30px;color:#212529;font-weight:700;font-style:italic;transform:scaleX(1.1431);">Pendente</span>
<div class="a" style="left:1778px;top:637.70px;width:94px;height:31.6px;background:#f8f9fa;border:1.4px solid #0c343e;border-radius:5px;"></div>
<div class="a" style="left:1840.2px;top:637.70px;width:31.8px;height:31.6px;border:1.4px solid #e8336b;border-radius:0 5px 5px 0;background:#f8f9fa"></div>
<div class="a" style="left:1808.90px;top:637.70px;width:1.40px;height:31.60px;background:#0c343e;"></div>
<svg class="a" style="left:1790px;top:645.60px" width="8" height="16" viewBox="0 0 8 16"><circle cx="3.6" cy="2.9" r="1.75" fill="#0c343e"/><path d="M1.1 6 H5 V12.9 H6.3 V14.75 H1.1 V12.9 H2.1 V8 H1.1 Z" fill="#0c343e"/></svg>
<svg class="a" style="left:1818px;top:646.40px" width="14.5" height="14.5" viewBox="0 0 512 512"><path fill="#0c343e" d="M497.9 142.1l-46.1 46.1c-4.7 4.7-12.3 4.7-17 0l-111-111c-4.7-4.7-4.7-12.3 0-17l46.1-46.1c18.7-18.7 49.1-18.7 67.9 0l60.1 60.1c18.8 18.7 18.8 49.1 0 67.9zM284.2 99.8L21.6 362.4.4 483.9c-2.9 16.4 11.4 30.6 27.8 27.8l121.5-21.3 262.6-262.6c4.7-4.7 4.7-12.3 0-17l-111-111c-4.8-4.7-12.4-4.7-17.1 0zM124.1 339.9c-5.5-5.5-5.5-14.3 0-19.8l154-154c5.5-5.5 14.3-5.5 19.8 0s5.5 14.3 0 19.8l-154 154c-5.5 5.5-14.3 5.5-19.8 0zM88 424h48v36.3l-64.5 11.3-31.1-31.1L51.7 376H88v48z"/></svg>
<svg class="a" style="left:1851px;top:648.80px" width="9.5" height="9.5" viewBox="0 0 10 10"><path d="M1 1 L9 9 M9 1 L1 9" stroke="#e8285c" stroke-width="1.7"/></svg>
<span id="t55" class="t" style="left:188.70px;top:684.21px;font-size:16.40px;line-height:16.40px;color:#212529;font-weight:400;transform:scaleX(0.9920);">CLIENTE DE EXEMPLO PORTAL</span>
<span id="t56" class="t" style="left:1347.80px;top:684.21px;font-size:16.40px;line-height:16.40px;color:#212529;font-weight:400;transform:scaleX(0.9938);">-</span>
<span id="t57" class="t" style="left:1507.60px;top:684.21px;font-size:16.40px;line-height:16.40px;color:#212529;font-weight:400;transform:scaleX(0.9749);">-</span>
<div class="a" style="left:480.00px;top:685.20px;width:69.70px;height:18.00px;background:#f6c32b;border-radius:3.5px;"></div>
<span id="t58" class="t" style="left:487.20px;top:688.03px;font-size:11.30px;line-height:11.30px;color:#212529;font-weight:700;font-style:italic;transform:scaleX(1.1431);">Pendente</span>
<div class="a" style="left:1778px;top:680.30px;width:94px;height:31.6px;background:#f8f9fa;border:1.4px solid #0c343e;border-radius:5px;"></div>
<div class="a" style="left:1840.2px;top:680.30px;width:31.8px;height:31.6px;border:1.4px solid #e8336b;border-radius:0 5px 5px 0;background:#f8f9fa"></div>
<div class="a" style="left:1808.90px;top:680.30px;width:1.40px;height:31.60px;background:#0c343e;"></div>
<svg class="a" style="left:1790px;top:688.20px" width="8" height="16" viewBox="0 0 8 16"><circle cx="3.6" cy="2.9" r="1.75" fill="#0c343e"/><path d="M1.1 6 H5 V12.9 H6.3 V14.75 H1.1 V12.9 H2.1 V8 H1.1 Z" fill="#0c343e"/></svg>
<svg class="a" style="left:1818px;top:689.00px" width="14.5" height="14.5" viewBox="0 0 512 512"><path fill="#0c343e" d="M497.9 142.1l-46.1 46.1c-4.7 4.7-12.3 4.7-17 0l-111-111c-4.7-4.7-4.7-12.3 0-17l46.1-46.1c18.7-18.7 49.1-18.7 67.9 0l60.1 60.1c18.8 18.7 18.8 49.1 0 67.9zM284.2 99.8L21.6 362.4.4 483.9c-2.9 16.4 11.4 30.6 27.8 27.8l121.5-21.3 262.6-262.6c4.7-4.7 4.7-12.3 0-17l-111-111c-4.8-4.7-12.4-4.7-17.1 0zM124.1 339.9c-5.5-5.5-5.5-14.3 0-19.8l154-154c5.5-5.5 14.3-5.5 19.8 0s5.5 14.3 0 19.8l-154 154c-5.5 5.5-14.3 5.5-19.8 0zM88 424h48v36.3l-64.5 11.3-31.1-31.1L51.7 376H88v48z"/></svg>
<svg class="a" style="left:1851px;top:691.40px" width="9.5" height="9.5" viewBox="0 0 10 10"><path d="M1 1 L9 9 M9 1 L1 9" stroke="#e8285c" stroke-width="1.7"/></svg>
<span id="t59" class="t" style="left:188.70px;top:726.81px;font-size:16.40px;line-height:16.40px;color:#212529;font-weight:400;transform:scaleX(0.9749);">CLIENTE PORTAL 01</span>
<span id="t60" class="t" style="left:1347.80px;top:726.81px;font-size:16.40px;line-height:16.40px;color:#212529;font-weight:400;transform:scaleX(0.9938);">-</span>
<span id="t61" class="t" style="left:1507.60px;top:726.81px;font-size:16.40px;line-height:16.40px;color:#212529;font-weight:400;transform:scaleX(0.9749);">-</span>
<div class="a" style="left:480.00px;top:727.80px;width:69.70px;height:18.00px;background:#f6c32b;border-radius:3.5px;"></div>
<span id="t62" class="t" style="left:487.20px;top:730.63px;font-size:11.30px;line-height:11.30px;color:#212529;font-weight:700;font-style:italic;transform:scaleX(1.1431);">Pendente</span>
<div class="a" style="left:1778px;top:722.90px;width:94px;height:31.6px;background:#f8f9fa;border:1.4px solid #0c343e;border-radius:5px;"></div>
<div class="a" style="left:1840.2px;top:722.90px;width:31.8px;height:31.6px;border:1.4px solid #e8336b;border-radius:0 5px 5px 0;background:#f8f9fa"></div>
<div class="a" style="left:1808.90px;top:722.90px;width:1.40px;height:31.60px;background:#0c343e;"></div>
<svg class="a" style="left:1790px;top:730.80px" width="8" height="16" viewBox="0 0 8 16"><circle cx="3.6" cy="2.9" r="1.75" fill="#0c343e"/><path d="M1.1 6 H5 V12.9 H6.3 V14.75 H1.1 V12.9 H2.1 V8 H1.1 Z" fill="#0c343e"/></svg>
<svg class="a" style="left:1818px;top:731.60px" width="14.5" height="14.5" viewBox="0 0 512 512"><path fill="#0c343e" d="M497.9 142.1l-46.1 46.1c-4.7 4.7-12.3 4.7-17 0l-111-111c-4.7-4.7-4.7-12.3 0-17l46.1-46.1c18.7-18.7 49.1-18.7 67.9 0l60.1 60.1c18.8 18.7 18.8 49.1 0 67.9zM284.2 99.8L21.6 362.4.4 483.9c-2.9 16.4 11.4 30.6 27.8 27.8l121.5-21.3 262.6-262.6c4.7-4.7 4.7-12.3 0-17l-111-111c-4.8-4.7-12.4-4.7-17.1 0zM124.1 339.9c-5.5-5.5-5.5-14.3 0-19.8l154-154c5.5-5.5 14.3-5.5 19.8 0s5.5 14.3 0 19.8l-154 154c-5.5 5.5-14.3 5.5-19.8 0zM88 424h48v36.3l-64.5 11.3-31.1-31.1L51.7 376H88v48z"/></svg>
<svg class="a" style="left:1851px;top:734.00px" width="9.5" height="9.5" viewBox="0 0 10 10"><path d="M1 1 L9 9 M9 1 L1 9" stroke="#e8285c" stroke-width="1.7"/></svg>
<span id="t63" class="t" style="left:188.70px;top:769.41px;font-size:16.40px;line-height:16.40px;color:#212529;font-weight:400;transform:scaleX(0.9749);">CONJUGE DE EXEMPLO 01</span>
<span id="t64" class="t" style="left:1347.80px;top:769.41px;font-size:16.40px;line-height:16.40px;color:#212529;font-weight:400;transform:scaleX(0.9938);">29/08/2025 15:08</span>
<span id="t65" class="t" style="left:1507.60px;top:769.41px;font-size:16.40px;line-height:16.40px;color:#212529;font-weight:400;transform:scaleX(0.9749);">-</span>
<div class="a" style="left:480.00px;top:770.40px;width:69.70px;height:18.00px;background:#f6c32b;border-radius:3.5px;"></div>
<span id="t66" class="t" style="left:487.20px;top:773.23px;font-size:11.30px;line-height:11.30px;color:#212529;font-weight:700;font-style:italic;transform:scaleX(1.1431);">Pendente</span>
<div class="a" style="left:1778px;top:765.50px;width:94px;height:31.6px;background:#f8f9fa;border:1.4px solid #0c343e;border-radius:5px;"></div>
<div class="a" style="left:1840.2px;top:765.50px;width:31.8px;height:31.6px;border:1.4px solid #e8336b;border-radius:0 5px 5px 0;background:#f8f9fa"></div>
<div class="a" style="left:1808.90px;top:765.50px;width:1.40px;height:31.60px;background:#0c343e;"></div>
<svg class="a" style="left:1790px;top:773.40px" width="8" height="16" viewBox="0 0 8 16"><circle cx="3.6" cy="2.9" r="1.75" fill="#0c343e"/><path d="M1.1 6 H5 V12.9 H6.3 V14.75 H1.1 V12.9 H2.1 V8 H1.1 Z" fill="#0c343e"/></svg>
<svg class="a" style="left:1818px;top:774.20px" width="14.5" height="14.5" viewBox="0 0 512 512"><path fill="#0c343e" d="M497.9 142.1l-46.1 46.1c-4.7 4.7-12.3 4.7-17 0l-111-111c-4.7-4.7-4.7-12.3 0-17l46.1-46.1c18.7-18.7 49.1-18.7 67.9 0l60.1 60.1c18.8 18.7 18.8 49.1 0 67.9zM284.2 99.8L21.6 362.4.4 483.9c-2.9 16.4 11.4 30.6 27.8 27.8l121.5-21.3 262.6-262.6c4.7-4.7 4.7-12.3 0-17l-111-111c-4.8-4.7-12.4-4.7-17.1 0zM124.1 339.9c-5.5-5.5-5.5-14.3 0-19.8l154-154c5.5-5.5 14.3-5.5 19.8 0s5.5 14.3 0 19.8l-154 154c-5.5 5.5-14.3 5.5-19.8 0zM88 424h48v36.3l-64.5 11.3-31.1-31.1L51.7 376H88v48z"/></svg>
<svg class="a" style="left:1851px;top:776.60px" width="9.5" height="9.5" viewBox="0 0 10 10"><path d="M1 1 L9 9 M9 1 L1 9" stroke="#e8285c" stroke-width="1.7"/></svg>
<span id="t67" class="t" style="left:1347.80px;top:812.01px;font-size:16.40px;line-height:16.40px;color:#212529;font-weight:400;transform:scaleX(0.9938);">-</span>
<span id="t68" class="t" style="left:1507.60px;top:812.01px;font-size:16.40px;line-height:16.40px;color:#212529;font-weight:400;transform:scaleX(0.9749);">-</span>
<div class="a" style="left:480.00px;top:813.00px;width:69.70px;height:18.00px;background:#f6c32b;border-radius:3.5px;"></div>
<span id="t69" class="t" style="left:487.20px;top:815.83px;font-size:11.30px;line-height:11.30px;color:#212529;font-weight:700;font-style:italic;transform:scaleX(1.1431);">Pendente</span>
<div class="a" style="left:1778px;top:808.10px;width:94px;height:31.6px;background:#f8f9fa;border:1.4px solid #0c343e;border-radius:5px;"></div>
<div class="a" style="left:1840.2px;top:808.10px;width:31.8px;height:31.6px;border:1.4px solid #e8336b;border-radius:0 5px 5px 0;background:#f8f9fa"></div>
<div class="a" style="left:1808.90px;top:808.10px;width:1.40px;height:31.60px;background:#0c343e;"></div>
<svg class="a" style="left:1790px;top:816.00px" width="8" height="16" viewBox="0 0 8 16"><circle cx="3.6" cy="2.9" r="1.75" fill="#0c343e"/><path d="M1.1 6 H5 V12.9 H6.3 V14.75 H1.1 V12.9 H2.1 V8 H1.1 Z" fill="#0c343e"/></svg>
<svg class="a" style="left:1818px;top:816.80px" width="14.5" height="14.5" viewBox="0 0 512 512"><path fill="#0c343e" d="M497.9 142.1l-46.1 46.1c-4.7 4.7-12.3 4.7-17 0l-111-111c-4.7-4.7-4.7-12.3 0-17l46.1-46.1c18.7-18.7 49.1-18.7 67.9 0l60.1 60.1c18.8 18.7 18.8 49.1 0 67.9zM284.2 99.8L21.6 362.4.4 483.9c-2.9 16.4 11.4 30.6 27.8 27.8l121.5-21.3 262.6-262.6c4.7-4.7 4.7-12.3 0-17l-111-111c-4.8-4.7-12.4-4.7-17.1 0zM124.1 339.9c-5.5-5.5-5.5-14.3 0-19.8l154-154c5.5-5.5 14.3-5.5 19.8 0s5.5 14.3 0 19.8l-154 154c-5.5 5.5-14.3 5.5-19.8 0zM88 424h48v36.3l-64.5 11.3-31.1-31.1L51.7 376H88v48z"/></svg>
<svg class="a" style="left:1851px;top:819.20px" width="9.5" height="9.5" viewBox="0 0 10 10"><path d="M1 1 L9 9 M9 1 L1 9" stroke="#e8285c" stroke-width="1.7"/></svg>
<span id="t70" class="t" style="left:34.00px;top:862.08px;font-size:16.20px;line-height:16.20px;color:#212529;font-weight:400;transform:scaleX(1.0125);">Mostrando de 1 até 11 de 11 registros</span>
<div class="a" style="left:1675.50px;top:848.30px;width:210.10px;height:38.20px;background:#ffffff;border:1px solid #dee2e6;border-radius:5px;"></div>
<div class="a" style="left:1763.90px;top:848.30px;width:32.10px;height:38.20px;background:#12c55f;"></div>
<span id="t71" class="t" style="left:1688.70px;top:858.52px;font-size:15.80px;line-height:15.80px;color:#6c757d;font-weight:400;transform:scaleX(1.1473);">Anterior</span>
<span id="t72" class="t" style="left:1776.50px;top:858.52px;font-size:15.80px;line-height:15.80px;color:#ffffff;font-weight:400;">1</span>
<span id="t73" class="t" style="left:1808.80px;top:858.52px;font-size:15.80px;line-height:15.80px;color:#6c757d;font-weight:400;transform:scaleX(1.1103);">Próximo</span>
<span id="t74" class="t" style="left:829.40px;top:925.64px;font-size:22.50px;line-height:22.50px;color:#959595;font-weight:400;transform:scaleX(0.9362);-webkit-text-stroke:0.3px #959595;">powered by</span>
<svg class="a" style="left:943px;top:918.4px" width="40" height="40" viewBox="-20 -20 40 40"><g fill="none" stroke="#959595" stroke-width="2.1"><rect x="-12.2" y="-12.2" width="24.4" height="24.4" rx="4" transform="rotate(-26)"/><rect x="-12.2" y="-12.2" width="24.4" height="24.4" rx="4" transform="rotate(26)"/></g></svg>
<span id="t75" class="t" style="left:986.00px;top:922.25px;font-size:26.50px;line-height:26.50px;color:#959595;font-weight:400;transform:scaleX(1.0196);-webkit-text-stroke:0.6px #959595;">abensoft</span>
<span id="t76" class="t" style="left:778.50px;top:964.99px;font-size:13.00px;line-height:13.00px;color:#36505e;font-weight:400;transform:scaleX(1.0138);">Termos de Uso</span>
<div class="a" style="left:875.20px;top:963.00px;width:1.20px;height:17.70px;background:#555a60;"></div>
<span id="t77" class="t" style="left:884.40px;top:964.99px;font-size:13.00px;line-height:13.00px;color:#36505e;font-weight:400;transform:scaleX(1.0168);">Declaração de Privacidade</span>
<div class="a" style="left:1050.50px;top:963.00px;width:1.20px;height:17.70px;background:#555a60;"></div>
<span id="t78" class="t" style="left:1060.40px;top:964.99px;font-size:13.00px;line-height:13.00px;color:#36505e;font-weight:400;transform:scaleX(0.9890);">Termos LGPD</span>
<div class="a" style="left:1848px;top:922px;width:50px;height:50px;border-radius:50%;background:#0b3a26"></div>
<svg class="a" style="left:1859px;top:933px" width="28" height="25" viewBox="0 0 576 512"><path fill="#fff" d="M416 192c0-88.4-93.1-160-208-160S0 103.6 0 192c0 34.3 14.1 65.9 38 92-13.4 30.2-35.5 54.2-35.8 54.5-2.2 2.3-2.8 5.7-1.5 8.7S4.8 352 8 352c36.6 0 66.9-12.3 88.7-25 32.2 15.7 70.3 25 111.3 25 114.9 0 208-71.6 208-160zm122 220c23.9-26 38-57.7 38-92 0-66.9-53.5-124.2-129.3-148.1.9 6.6 1.3 13.3 1.3 20.1 0 105.9-107.7 192-240 192-10.8 0-21.3-.8-31.7-1.9C207.8 439.6 281.8 480 368 480c41 0 79.1-9.2 111.3-25 21.8 12.7 52.1 25 88.7 25 3.2 0 6.1-1.9 7.3-4.8 1.3-2.9.7-6.3-1.5-8.7-.3-.3-22.4-24.2-35.8-54.5z"/></svg>
<svg class="a" style="left:1400px;top:954px" width="14" height="22" viewBox="0 0 14 22"><path d="M1 1 L1 17 L4.8 13.4 L7.6 20 L10 19 L7.3 12.6 L12.5 12.6 Z" fill="#fff" stroke="#111" stroke-width="1.1" stroke-linejoin="round"/></svg>
<div class="a" style="left:41.00px;top:412.00px;width:135.00px;height:15.00px;background:#fbfcfc;"></div>
<div class="a" style="left:41.00px;top:457.00px;width:135.00px;height:15.00px;background:#fbfcfc;"></div>
<div class="a" style="left:41.00px;top:502.00px;width:135.00px;height:15.00px;background:#fbfcfc;"></div>
<div class="a" style="left:41.00px;top:532.00px;width:135.00px;height:15.00px;background:#fbfcfc;"></div>
<div class="a" style="left:41.00px;top:577.00px;width:135.00px;height:15.00px;background:#fbfcfc;"></div>
<div class="a" style="left:41.00px;top:622.00px;width:135.00px;height:15.00px;background:#fbfcfc;"></div>
<div class="a" style="left:41.00px;top:667.00px;width:135.00px;height:15.00px;background:#fbfcfc;"></div>
<div class="a" style="left:41.00px;top:712.00px;width:135.00px;height:15.00px;background:#fbfcfc;"></div>
<div class="a" style="left:41.00px;top:757.00px;width:135.00px;height:15.00px;background:#fbfcfc;"></div>
<div class="a" style="left:41.00px;top:802.00px;width:135.00px;height:15.00px;background:#fbfcfc;"></div>
<div class="a" style="left:572.00px;top:412.00px;width:150.00px;height:15.00px;background:#fbfcfc;"></div>
<div class="a" style="left:572.00px;top:457.00px;width:150.00px;height:15.00px;background:#fbfcfc;"></div>
<div class="a" style="left:572.00px;top:502.00px;width:150.00px;height:15.00px;background:#fbfcfc;"></div>
<div class="a" style="left:572.00px;top:532.00px;width:150.00px;height:15.00px;background:#fbfcfc;"></div>
<div class="a" style="left:572.00px;top:577.00px;width:150.00px;height:15.00px;background:#fbfcfc;"></div>
<div class="a" style="left:572.00px;top:622.00px;width:150.00px;height:15.00px;background:#fbfcfc;"></div>
<div class="a" style="left:572.00px;top:667.00px;width:150.00px;height:15.00px;background:#fbfcfc;"></div>
<div class="a" style="left:572.00px;top:712.00px;width:150.00px;height:15.00px;background:#fbfcfc;"></div>
<div class="a" style="left:572.00px;top:757.00px;width:150.00px;height:15.00px;background:#fbfcfc;"></div>
<div class="a" style="left:572.00px;top:802.00px;width:150.00px;height:15.00px;background:#fbfcfc;"></div>
<div class="a" style="left:730.00px;top:408.00px;width:600.00px;height:15.00px;background:#fbfcfc;"></div>
<div class="a" style="left:730.00px;top:453.00px;width:600.00px;height:15.00px;background:#fbfcfc;"></div>
<div class="a" style="left:730.00px;top:498.00px;width:600.00px;height:15.00px;background:#fbfcfc;"></div>
<div class="a" style="left:730.00px;top:543.00px;width:600.00px;height:15.00px;background:#fbfcfc;"></div>
<div class="a" style="left:730.00px;top:588.00px;width:600.00px;height:15.00px;background:#fbfcfc;"></div>
<div class="a" style="left:730.00px;top:618.00px;width:600.00px;height:15.00px;background:#fbfcfc;"></div>
<div class="a" style="left:730.00px;top:663.00px;width:600.00px;height:15.00px;background:#fbfcfc;"></div>
<div class="a" style="left:730.00px;top:708.00px;width:600.00px;height:15.00px;background:#fbfcfc;"></div>
<div class="a" style="left:730.00px;top:753.00px;width:600.00px;height:15.00px;background:#fbfcfc;"></div>
<div class="a" style="left:730.00px;top:798.00px;width:600.00px;height:15.00px;background:#fbfcfc;"></div>
<div class="a" style="left:41px;top:382px;width:15px;height:15px;background:#e1e1e3"></div><div class="a" style="left:56px;top:382px;width:15px;height:15px;background:#d6d7d9"></div><div class="a" style="left:71px;top:382px;width:15px;height:15px;background:#e6e6e8"></div><div class="a" style="left:86px;top:382px;width:15px;height:15px;background:#d6d7d9"></div><div class="a" style="left:101px;top:382px;width:15px;height:15px;background:#dcdcde"></div><div class="a" style="left:116px;top:382px;width:15px;height:15px;background:#dcdcde"></div><div class="a" style="left:131px;top:382px;width:15px;height:15px;background:#e1e1e3"></div><div class="a" style="left:146px;top:382px;width:15px;height:15px;background:#e1e1e3"></div>
<div class="a" style="left:41px;top:397px;width:15px;height:15px;background:#f2f2f3"></div><div class="a" style="left:56px;top:397px;width:15px;height:15px;background:#f2f2f3"></div><div class="a" style="left:71px;top:397px;width:15px;height:15px;background:#f9fafa"></div><div class="a" style="left:86px;top:397px;width:15px;height:15px;background:#f2f2f3"></div><div class="a" style="left:101px;top:397px;width:15px;height:15px;background:#f9fafa"></div><div class="a" style="left:116px;top:397px;width:15px;height:15px;background:#f2f2f3"></div><div class="a" style="left:131px;top:397px;width:15px;height:15px;background:#f9fafa"></div><div class="a" style="left:146px;top:397px;width:15px;height:15px;background:#f2f2f3"></div>
<div class="a" style="left:41px;top:427px;width:15px;height:15px;background:#dcdcde"></div><div class="a" style="left:56px;top:427px;width:15px;height:15px;background:#dcdcde"></div><div class="a" style="left:71px;top:427px;width:15px;height:15px;background:#d6d7d9"></div><div class="a" style="left:86px;top:427px;width:15px;height:15px;background:#d6d7d9"></div><div class="a" style="left:101px;top:427px;width:15px;height:15px;background:#dcdcde"></div><div class="a" style="left:116px;top:427px;width:15px;height:15px;background:#dcdcde"></div><div class="a" style="left:131px;top:427px;width:15px;height:15px;background:#dcdcde"></div><div class="a" style="left:146px;top:427px;width:15px;height:15px;background:#e6e6e8"></div>
<div class="a" style="left:41px;top:472px;width:15px;height:15px;background:#e6e6e8"></div><div class="a" style="left:56px;top:472px;width:15px;height:15px;background:#d0d1d3"></div><div class="a" style="left:71px;top:472px;width:15px;height:15px;background:#e1e1e3"></div><div class="a" style="left:86px;top:472px;width:15px;height:15px;background:#d6d7d9"></div><div class="a" style="left:101px;top:472px;width:15px;height:15px;background:#dcdcde"></div><div class="a" style="left:116px;top:472px;width:15px;height:15px;background:#d6d7d9"></div><div class="a" style="left:131px;top:472px;width:15px;height:15px;background:#e1e1e3"></div><div class="a" style="left:146px;top:472px;width:15px;height:15px;background:#e1e1e3"></div>
<div class="a" style="left:41px;top:502px;width:15px;height:15px;background:#f2f2f3"></div><div class="a" style="left:56px;top:502px;width:15px;height:15px;background:#f2f2f3"></div><div class="a" style="left:71px;top:502px;width:15px;height:15px;background:#f9fafa"></div><div class="a" style="left:86px;top:502px;width:15px;height:15px;background:#f2f2f3"></div><div class="a" style="left:101px;top:502px;width:15px;height:15px;background:#f2f2f3"></div><div class="a" style="left:116px;top:502px;width:15px;height:15px;background:#f9fafa"></div><div class="a" style="left:131px;top:502px;width:15px;height:15px;background:#f2f2f3"></div><div class="a" style="left:146px;top:502px;width:15px;height:15px;background:#f2f2f3"></div><div class="a" style="left:161px;top:502px;width:15px;height:15px;background:#f9fafa"></div>
<div class="a" style="left:41px;top:517px;width:15px;height:15px;background:#e6e6e8"></div><div class="a" style="left:56px;top:517px;width:15px;height:15px;background:#e6e6e8"></div><div class="a" style="left:71px;top:517px;width:15px;height:15px;background:#d6d7d9"></div><div class="a" style="left:86px;top:517px;width:15px;height:15px;background:#e1e1e3"></div><div class="a" style="left:101px;top:517px;width:15px;height:15px;background:#dcdcde"></div><div class="a" style="left:116px;top:517px;width:15px;height:15px;background:#dcdcde"></div><div class="a" style="left:131px;top:517px;width:15px;height:15px;background:#ececed"></div><div class="a" style="left:146px;top:517px;width:15px;height:15px;background:#e6e6e8"></div>
<div class="a" style="left:41px;top:547px;width:15px;height:15px;background:#e6e6e8"></div><div class="a" style="left:56px;top:547px;width:15px;height:15px;background:#e6e6e8"></div><div class="a" style="left:71px;top:547px;width:15px;height:15px;background:#f2f2f3"></div><div class="a" style="left:86px;top:547px;width:15px;height:15px;background:#ececed"></div><div class="a" style="left:101px;top:547px;width:15px;height:15px;background:#f2f2f3"></div><div class="a" style="left:116px;top:547px;width:15px;height:15px;background:#ececed"></div><div class="a" style="left:131px;top:547px;width:15px;height:15px;background:#f2f2f3"></div><div class="a" style="left:146px;top:547px;width:15px;height:15px;background:#f2f2f3"></div><div class="a" style="left:161px;top:547px;width:15px;height:15px;background:#f9fafa"></div>
<div class="a" style="left:41px;top:562px;width:15px;height:15px;background:#f2f2f3"></div><div class="a" style="left:56px;top:562px;width:15px;height:15px;background:#d6d7d9"></div><div class="a" style="left:71px;top:562px;width:15px;height:15px;background:#e6e6e8"></div><div class="a" style="left:86px;top:562px;width:15px;height:15px;background:#d6d7d9"></div><div class="a" style="left:101px;top:562px;width:15px;height:15px;background:#ececed"></div><div class="a" style="left:116px;top:562px;width:15px;height:15px;background:#dcdcde"></div><div class="a" style="left:131px;top:562px;width:15px;height:15px;background:#e6e6e8"></div><div class="a" style="left:146px;top:562px;width:15px;height:15px;background:#ececed"></div>
<div class="a" style="left:41px;top:592px;width:15px;height:15px;background:#ececed"></div><div class="a" style="left:56px;top:592px;width:15px;height:15px;background:#e6e6e8"></div><div class="a" style="left:71px;top:592px;width:15px;height:15px;background:#e6e6e8"></div><div class="a" style="left:86px;top:592px;width:15px;height:15px;background:#e1e1e3"></div><div class="a" style="left:101px;top:592px;width:15px;height:15px;background:#e6e6e8"></div><div class="a" style="left:116px;top:592px;width:15px;height:15px;background:#f2f2f3"></div><div class="a" style="left:131px;top:592px;width:15px;height:15px;background:#f2f2f3"></div><div class="a" style="left:146px;top:592px;width:15px;height:15px;background:#e6e6e8"></div><div class="a" style="left:161px;top:592px;width:15px;height:15px;background:#f9fafa"></div>
<div class="a" style="left:41px;top:607px;width:15px;height:15px;background:#ececed"></div><div class="a" style="left:56px;top:607px;width:15px;height:15px;background:#f2f2f3"></div><div class="a" style="left:71px;top:607px;width:15px;height:15px;background:#e6e6e8"></div><div class="a" style="left:86px;top:607px;width:15px;height:15px;background:#ececed"></div><div class="a" style="left:101px;top:607px;width:15px;height:15px;background:#ececed"></div><div class="a" style="left:116px;top:607px;width:15px;height:15px;background:#ececed"></div><div class="a" style="left:131px;top:607px;width:15px;height:15px;background:#f2f2f3"></div><div class="a" style="left:146px;top:607px;width:15px;height:15px;background:#ececed"></div><div class="a" style="left:161px;top:607px;width:15px;height:15px;background:#f9fafa"></div>
<div class="a" style="left:41px;top:637px;width:15px;height:15px;background:#e1e1e3"></div><div class="a" style="left:56px;top:637px;width:15px;height:15px;background:#e1e1e3"></div><div class="a" style="left:71px;top:637px;width:15px;height:15px;background:#e6e6e8"></div><div class="a" style="left:86px;top:637px;width:15px;height:15px;background:#e1e1e3"></div><div class="a" style="left:101px;top:637px;width:15px;height:15px;background:#dcdcde"></div><div class="a" style="left:116px;top:637px;width:15px;height:15px;background:#e1e1e3"></div><div class="a" style="left:131px;top:637px;width:15px;height:15px;background:#e6e6e8"></div><div class="a" style="left:146px;top:637px;width:15px;height:15px;background:#ececed"></div>
<div class="a" style="left:41px;top:652px;width:15px;height:15px;background:#f2f2f3"></div><div class="a" style="left:56px;top:652px;width:15px;height:15px;background:#f2f2f3"></div><div class="a" style="left:71px;top:652px;width:15px;height:15px;background:#f9fafa"></div><div class="a" style="left:86px;top:652px;width:15px;height:15px;background:#f2f2f3"></div><div class="a" style="left:101px;top:652px;width:15px;height:15px;background:#f2f2f3"></div><div class="a" style="left:116px;top:652px;width:15px;height:15px;background:#f2f2f3"></div>
<div class="a" style="left:41px;top:682px;width:15px;height:15px;background:#e6e6e8"></div><div class="a" style="left:56px;top:682px;width:15px;height:15px;background:#dcdcde"></div><div class="a" style="left:71px;top:682px;width:15px;height:15px;background:#d6d7d9"></div><div class="a" style="left:86px;top:682px;width:15px;height:15px;background:#d6d7d9"></div><div class="a" style="left:101px;top:682px;width:15px;height:15px;background:#e1e1e3"></div><div class="a" style="left:116px;top:682px;width:15px;height:15px;background:#dcdcde"></div><div class="a" style="left:131px;top:682px;width:15px;height:15px;background:#e6e6e8"></div><div class="a" style="left:146px;top:682px;width:15px;height:15px;background:#dcdcde"></div>
<div class="a" style="left:41px;top:727px;width:15px;height:15px;background:#dcdcde"></div><div class="a" style="left:56px;top:727px;width:15px;height:15px;background:#d6d7d9"></div><div class="a" style="left:71px;top:727px;width:15px;height:15px;background:#dcdcde"></div><div class="a" style="left:86px;top:727px;width:15px;height:15px;background:#d6d7d9"></div><div class="a" style="left:101px;top:727px;width:15px;height:15px;background:#dcdcde"></div><div class="a" style="left:116px;top:727px;width:15px;height:15px;background:#dcdcde"></div><div class="a" style="left:131px;top:727px;width:15px;height:15px;background:#ececed"></div><div class="a" style="left:146px;top:727px;width:15px;height:15px;background:#e6e6e8"></div>
<div class="a" style="left:41px;top:772px;width:15px;height:15px;background:#dcdcde"></div><div class="a" style="left:56px;top:772px;width:15px;height:15px;background:#dcdcde"></div><div class="a" style="left:71px;top:772px;width:15px;height:15px;background:#dcdcde"></div><div class="a" style="left:86px;top:772px;width:15px;height:15px;background:#dcdcde"></div><div class="a" style="left:101px;top:772px;width:15px;height:15px;background:#d6d7d9"></div><div class="a" style="left:116px;top:772px;width:15px;height:15px;background:#dcdcde"></div><div class="a" style="left:131px;top:772px;width:15px;height:15px;background:#e6e6e8"></div><div class="a" style="left:146px;top:772px;width:15px;height:15px;background:#d0d1d3"></div>
<div class="a" style="left:41px;top:802px;width:15px;height:15px;background:#f2f2f3"></div><div class="a" style="left:56px;top:802px;width:15px;height:15px;background:#ececed"></div><div class="a" style="left:71px;top:802px;width:15px;height:15px;background:#f9fafa"></div><div class="a" style="left:86px;top:802px;width:15px;height:15px;background:#f2f2f3"></div><div class="a" style="left:101px;top:802px;width:15px;height:15px;background:#ececed"></div><div class="a" style="left:116px;top:802px;width:15px;height:15px;background:#ececed"></div><div class="a" style="left:131px;top:802px;width:15px;height:15px;background:#f2f2f3"></div><div class="a" style="left:146px;top:802px;width:15px;height:15px;background:#e6e6e8"></div><div class="a" style="left:161px;top:802px;width:15px;height:15px;background:#f2f2f3"></div>
<div class="a" style="left:41px;top:817px;width:15px;height:15px;background:#e6e6e8"></div><div class="a" style="left:56px;top:817px;width:15px;height:15px;background:#d6d7d9"></div><div class="a" style="left:71px;top:817px;width:15px;height:15px;background:#e6e6e8"></div><div class="a" style="left:86px;top:817px;width:15px;height:15px;background:#e1e1e3"></div><div class="a" style="left:101px;top:817px;width:15px;height:15px;background:#e1e1e3"></div><div class="a" style="left:116px;top:817px;width:15px;height:15px;background:#dcdcde"></div><div class="a" style="left:131px;top:817px;width:15px;height:15px;background:#e6e6e8"></div><div class="a" style="left:146px;top:817px;width:15px;height:15px;background:#d6d7d9"></div><div class="a" style="left:161px;top:817px;width:15px;height:15px;background:#f2f2f3"></div>
<div class="a" style="left:183px;top:804px;width:15px;height:15px;background:#f9fafa"></div><div class="a" style="left:198px;top:804px;width:15px;height:15px;background:#e6e6e8"></div><div class="a" style="left:213px;top:804px;width:15px;height:15px;background:#ececed"></div><div class="a" style="left:228px;top:804px;width:15px;height:15px;background:#e6e6e8"></div><div class="a" style="left:243px;top:804px;width:15px;height:15px;background:#ececed"></div><div class="a" style="left:258px;top:804px;width:15px;height:15px;background:#e6e6e8"></div><div class="a" style="left:273px;top:804px;width:15px;height:15px;background:#f2f2f3"></div><div class="a" style="left:288px;top:804px;width:15px;height:15px;background:#e6e6e8"></div><div class="a" style="left:303px;top:804px;width:15px;height:15px;background:#ececed"></div><div class="a" style="left:318px;top:804px;width:15px;height:15px;background:#f2f2f3"></div>
<div class="a" style="left:183px;top:819px;width:15px;height:15px;background:#f2f2f3"></div><div class="a" style="left:198px;top:819px;width:15px;height:15px;background:#e1e1e3"></div><div class="a" style="left:213px;top:819px;width:15px;height:15px;background:#e6e6e8"></div><div class="a" style="left:228px;top:819px;width:15px;height:15px;background:#e1e1e3"></div><div class="a" style="left:243px;top:819px;width:15px;height:15px;background:#e1e1e3"></div><div class="a" style="left:258px;top:819px;width:15px;height:15px;background:#e1e1e3"></div><div class="a" style="left:273px;top:819px;width:15px;height:15px;background:#f9fafa"></div><div class="a" style="left:288px;top:819px;width:15px;height:15px;background:#e1e1e3"></div><div class="a" style="left:303px;top:819px;width:15px;height:15px;background:#e6e6e8"></div><div class="a" style="left:318px;top:819px;width:15px;height:15px;background:#ececed"></div>
<div class="a" style="left:572px;top:382px;width:15px;height:15px;background:#e1e1e3"></div><div class="a" style="left:587px;top:382px;width:15px;height:15px;background:#dcdcde"></div><div class="a" style="left:602px;top:382px;width:15px;height:15px;background:#e1e1e3"></div><div class="a" style="left:617px;top:382px;width:15px;height:15px;background:#e1e1e3"></div><div class="a" style="left:632px;top:382px;width:15px;height:15px;background:#d6d7d9"></div><div class="a" style="left:647px;top:382px;width:15px;height:15px;background:#e6e6e8"></div><div class="a" style="left:662px;top:382px;width:15px;height:15px;background:#e1e1e3"></div><div class="a" style="left:677px;top:382px;width:15px;height:15px;background:#d6d7d9"></div><div class="a" style="left:692px;top:382px;width:15px;height:15px;background:#e6e6e8"></div>
<div class="a" style="left:572px;top:397px;width:15px;height:15px;background:#f9fafa"></div><div class="a" style="left:587px;top:397px;width:15px;height:15px;background:#f2f2f3"></div><div class="a" style="left:602px;top:397px;width:15px;height:15px;background:#f2f2f3"></div><div class="a" style="left:617px;top:397px;width:15px;height:15px;background:#f2f2f3"></div><div class="a" style="left:632px;top:397px;width:15px;height:15px;background:#f9fafa"></div><div class="a" style="left:647px;top:397px;width:15px;height:15px;background:#f2f2f3"></div><div class="a" style="left:662px;top:397px;width:15px;height:15px;background:#f2f2f3"></div><div class="a" style="left:677px;top:397px;width:15px;height:15px;background:#f9fafa"></div><div class="a" style="left:692px;top:397px;width:15px;height:15px;background:#f2f2f3"></div>
<div class="a" style="left:572px;top:427px;width:15px;height:15px;background:#e1e1e3"></div><div class="a" style="left:587px;top:427px;width:15px;height:15px;background:#d6d7d9"></div><div class="a" style="left:602px;top:427px;width:15px;height:15px;background:#dcdcde"></div><div class="a" style="left:617px;top:427px;width:15px;height:15px;background:#d0d1d3"></div><div class="a" style="left:632px;top:427px;width:15px;height:15px;background:#d0d1d3"></div><div class="a" style="left:647px;top:427px;width:15px;height:15px;background:#dcdcde"></div><div class="a" style="left:662px;top:427px;width:15px;height:15px;background:#d6d7d9"></div><div class="a" style="left:677px;top:427px;width:15px;height:15px;background:#d0d1d3"></div><div class="a" style="left:692px;top:427px;width:15px;height:15px;background:#e1e1e3"></div>
<div class="a" style="left:572px;top:442px;width:15px;height:15px;background:#f9fafa"></div><div class="a" style="left:587px;top:442px;width:15px;height:15px;background:#f9fafa"></div><div class="a" style="left:602px;top:442px;width:15px;height:15px;background:#f9fafa"></div>
<div class="a" style="left:572px;top:472px;width:15px;height:15px;background:#f9fafa"></div>
<div class="a" style="left:572px;top:502px;width:15px;height:15px;background:#f9fafa"></div><div class="a" style="left:587px;top:502px;width:15px;height:15px;background:#f2f2f3"></div><div class="a" style="left:602px;top:502px;width:15px;height:15px;background:#f2f2f3"></div><div class="a" style="left:617px;top:502px;width:15px;height:15px;background:#ececed"></div><div class="a" style="left:632px;top:502px;width:15px;height:15px;background:#f9fafa"></div><div class="a" style="left:647px;top:502px;width:15px;height:15px;background:#f2f2f3"></div><div class="a" style="left:662px;top:502px;width:15px;height:15px;background:#ececed"></div><div class="a" style="left:677px;top:502px;width:15px;height:15px;background:#f9fafa"></div><div class="a" style="left:692px;top:502px;width:15px;height:15px;background:#f9fafa"></div>
<div class="a" style="left:572px;top:517px;width:15px;height:15px;background:#e1e1e3"></div><div class="a" style="left:587px;top:517px;width:15px;height:15px;background:#dcdcde"></div><div class="a" style="left:602px;top:517px;width:15px;height:15px;background:#e1e1e3"></div><div class="a" style="left:617px;top:517px;width:15px;height:15px;background:#dcdcde"></div><div class="a" style="left:632px;top:517px;width:15px;height:15px;background:#e6e6e8"></div><div class="a" style="left:647px;top:517px;width:15px;height:15px;background:#dcdcde"></div><div class="a" style="left:662px;top:517px;width:15px;height:15px;background:#e1e1e3"></div><div class="a" style="left:677px;top:517px;width:15px;height:15px;background:#e6e6e8"></div>
<div class="a" style="left:572px;top:547px;width:15px;height:15px;background:#f2f2f3"></div><div class="a" style="left:587px;top:547px;width:15px;height:15px;background:#ececed"></div><div class="a" style="left:602px;top:547px;width:15px;height:15px;background:#f2f2f3"></div><div class="a" style="left:617px;top:547px;width:15px;height:15px;background:#ececed"></div><div class="a" style="left:632px;top:547px;width:15px;height:15px;background:#ececed"></div><div class="a" style="left:647px;top:547px;width:15px;height:15px;background:#f2f2f3"></div><div class="a" style="left:662px;top:547px;width:15px;height:15px;background:#ececed"></div><div class="a" style="left:677px;top:547px;width:15px;height:15px;background:#ececed"></div><div class="a" style="left:692px;top:547px;width:15px;height:15px;background:#f2f2f3"></div>
<div class="a" style="left:572px;top:562px;width:15px;height:15px;background:#e1e1e3"></div><div class="a" style="left:587px;top:562px;width:15px;height:15px;background:#dcdcde"></div><div class="a" style="left:602px;top:562px;width:15px;height:15px;background:#e6e6e8"></div><div class="a" style="left:617px;top:562px;width:15px;height:15px;background:#dcdcde"></div><div class="a" style="left:632px;top:562px;width:15px;height:15px;background:#dcdcde"></div><div class="a" style="left:647px;top:562px;width:15px;height:15px;background:#e1e1e3"></div><div class="a" style="left:662px;top:562px;width:15px;height:15px;background:#e1e1e3"></div><div class="a" style="left:677px;top:562px;width:15px;height:15px;background:#d6d7d9"></div><div class="a" style="left:692px;top:562px;width:15px;height:15px;background:#e6e6e8"></div>
<div class="a" style="left:572px;top:607px;width:15px;height:15px;background:#f9fafa"></div>
<div class="a" style="left:572px;top:637px;width:15px;height:15px;background:#f9fafa"></div>
<div class="a" style="left:572px;top:682px;width:15px;height:15px;background:#e1e1e3"></div><div class="a" style="left:587px;top:682px;width:15px;height:15px;background:#d6d7d9"></div><div class="a" style="left:602px;top:682px;width:15px;height:15px;background:#dcdcde"></div><div class="a" style="left:617px;top:682px;width:15px;height:15px;background:#d0d1d3"></div><div class="a" style="left:632px;top:682px;width:15px;height:15px;background:#d0d1d3"></div><div class="a" style="left:647px;top:682px;width:15px;height:15px;background:#dcdcde"></div><div class="a" style="left:662px;top:682px;width:15px;height:15px;background:#dcdcde"></div><div class="a" style="left:677px;top:682px;width:15px;height:15px;background:#d0d1d3"></div><div class="a" style="left:692px;top:682px;width:15px;height:15px;background:#e1e1e3"></div>
<div class="a" style="left:572px;top:697px;width:15px;height:15px;background:#f9fafa"></div><div class="a" style="left:587px;top:697px;width:15px;height:15px;background:#f9fafa"></div><div class="a" style="left:602px;top:697px;width:15px;height:15px;background:#f9fafa"></div>
<div class="a" style="left:572px;top:727px;width:15px;height:15px;background:#e1e1e3"></div><div class="a" style="left:587px;top:727px;width:15px;height:15px;background:#d6d7d9"></div><div class="a" style="left:602px;top:727px;width:15px;height:15px;background:#dcdcde"></div><div class="a" style="left:617px;top:727px;width:15px;height:15px;background:#dcdcde"></div><div class="a" style="left:632px;top:727px;width:15px;height:15px;background:#dcdcde"></div><div class="a" style="left:647px;top:727px;width:15px;height:15px;background:#e1e1e3"></div><div class="a" style="left:662px;top:727px;width:15px;height:15px;background:#d6d7d9"></div><div class="a" style="left:677px;top:727px;width:15px;height:15px;background:#e6e6e8"></div>
<div class="a" style="left:572px;top:742px;width:15px;height:15px;background:#f9fafa"></div><div class="a" style="left:587px;top:742px;width:15px;height:15px;background:#f9fafa"></div>
<div class="a" style="left:572px;top:772px;width:15px;height:15px;background:#f9fafa"></div>
<div class="a" style="left:572px;top:802px;width:15px;height:15px;background:#f2f2f3"></div><div class="a" style="left:587px;top:802px;width:15px;height:15px;background:#ececed"></div><div class="a" style="left:602px;top:802px;width:15px;height:15px;background:#f2f2f3"></div><div class="a" style="left:617px;top:802px;width:15px;height:15px;background:#ececed"></div><div class="a" style="left:632px;top:802px;width:15px;height:15px;background:#ececed"></div><div class="a" style="left:647px;top:802px;width:15px;height:15px;background:#f2f2f3"></div><div class="a" style="left:662px;top:802px;width:15px;height:15px;background:#f2f2f3"></div><div class="a" style="left:677px;top:802px;width:15px;height:15px;background:#ececed"></div><div class="a" style="left:692px;top:802px;width:15px;height:15px;background:#f2f2f3"></div><div class="a" style="left:707px;top:802px;width:15px;height:15px;background:#f9fafa"></div>
<div class="a" style="left:572px;top:817px;width:15px;height:15px;background:#e6e6e8"></div><div class="a" style="left:587px;top:817px;width:15px;height:15px;background:#dcdcde"></div><div class="a" style="left:602px;top:817px;width:15px;height:15px;background:#e6e6e8"></div><div class="a" style="left:617px;top:817px;width:15px;height:15px;background:#dcdcde"></div><div class="a" style="left:632px;top:817px;width:15px;height:15px;background:#dcdcde"></div><div class="a" style="left:647px;top:817px;width:15px;height:15px;background:#e6e6e8"></div><div class="a" style="left:662px;top:817px;width:15px;height:15px;background:#e6e6e8"></div><div class="a" style="left:677px;top:817px;width:15px;height:15px;background:#dcdcde"></div><div class="a" style="left:692px;top:817px;width:15px;height:15px;background:#ececed"></div>
<div class="a" style="left:730px;top:378px;width:15px;height:15px;background:#ececed"></div><div class="a" style="left:745px;top:378px;width:15px;height:15px;background:#ececed"></div><div class="a" style="left:760px;top:378px;width:15px;height:15px;background:#ececed"></div><div class="a" style="left:775px;top:378px;width:15px;height:15px;background:#e6e6e8"></div><div class="a" style="left:790px;top:378px;width:15px;height:15px;background:#ececed"></div><div class="a" style="left:805px;top:378px;width:15px;height:15px;background:#ececed"></div><div class="a" style="left:820px;top:378px;width:15px;height:15px;background:#f2f2f3"></div><div class="a" style="left:835px;top:378px;width:15px;height:15px;background:#e6e6e8"></div><div class="a" style="left:850px;top:378px;width:15px;height:15px;background:#e6e6e8"></div><div class="a" style="left:865px;top:378px;width:15px;height:15px;background:#ececed"></div><div class="a" style="left:880px;top:378px;width:15px;height:15px;background:#f9fafa"></div>
<div class="a" style="left:730px;top:393px;width:15px;height:15px;background:#e6e6e8"></div><div class="a" style="left:745px;top:393px;width:15px;height:15px;background:#e6e6e8"></div><div class="a" style="left:760px;top:393px;width:15px;height:15px;background:#e6e6e8"></div><div class="a" style="left:775px;top:393px;width:15px;height:15px;background:#e6e6e8"></div><div class="a" style="left:790px;top:393px;width:15px;height:15px;background:#e6e6e8"></div><div class="a" style="left:805px;top:393px;width:15px;height:15px;background:#ececed"></div><div class="a" style="left:820px;top:393px;width:15px;height:15px;background:#ececed"></div><div class="a" style="left:835px;top:393px;width:15px;height:15px;background:#e6e6e8"></div><div class="a" style="left:850px;top:393px;width:15px;height:15px;background:#e6e6e8"></div><div class="a" style="left:865px;top:393px;width:15px;height:15px;background:#ececed"></div><div class="a" style="left:880px;top:393px;width:15px;height:15px;background:#f9fafa"></div>
<div class="a" style="left:730px;top:423px;width:15px;height:15px;background:#ececed"></div><div class="a" style="left:745px;top:423px;width:15px;height:15px;background:#e1e1e3"></div><div class="a" style="left:760px;top:423px;width:15px;height:15px;background:#e1e1e3"></div><div class="a" style="left:775px;top:423px;width:15px;height:15px;background:#e1e1e3"></div><div class="a" style="left:790px;top:423px;width:15px;height:15px;background:#e6e6e8"></div><div class="a" style="left:805px;top:423px;width:15px;height:15px;background:#e1e1e3"></div><div class="a" style="left:820px;top:423px;width:15px;height:15px;background:#ececed"></div><div class="a" style="left:835px;top:423px;width:15px;height:15px;background:#e1e1e3"></div><div class="a" style="left:850px;top:423px;width:15px;height:15px;background:#ececed"></div><div class="a" style="left:865px;top:423px;width:15px;height:15px;background:#e1e1e3"></div><div class="a" style="left:880px;top:423px;width:15px;height:15px;background:#e6e6e8"></div><div class="a" style="left:895px;top:423px;width:15px;height:15px;background:#dcdcde"></div><div class="a" style="left:910px;top:423px;width:15px;height:15px;background:#e6e6e8"></div><div class="a" style="left:925px;top:423px;width:15px;height:15px;background:#ececed"></div><div class="a" style="left:940px;top:423px;width:15px;height:15px;background:#e6e6e8"></div>
<div class="a" style="left:730px;top:438px;width:15px;height:15px;background:#f2f2f3"></div><div class="a" style="left:745px;top:438px;width:15px;height:15px;background:#ececed"></div><div class="a" style="left:760px;top:438px;width:15px;height:15px;background:#f2f2f3"></div><div class="a" style="left:775px;top:438px;width:15px;height:15px;background:#ececed"></div><div class="a" style="left:790px;top:438px;width:15px;height:15px;background:#f2f2f3"></div><div class="a" style="left:805px;top:438px;width:15px;height:15px;background:#f2f2f3"></div><div class="a" style="left:820px;top:438px;width:15px;height:15px;background:#f2f2f3"></div><div class="a" style="left:835px;top:438px;width:15px;height:15px;background:#ececed"></div><div class="a" style="left:850px;top:438px;width:15px;height:15px;background:#f2f2f3"></div><div class="a" style="left:865px;top:438px;width:15px;height:15px;background:#ececed"></div><div class="a" style="left:880px;top:438px;width:15px;height:15px;background:#f2f2f3"></div><div class="a" style="left:895px;top:438px;width:15px;height:15px;background:#f2f2f3"></div><div class="a" style="left:910px;top:438px;width:15px;height:15px;background:#f2f2f3"></div><div class="a" style="left:925px;top:438px;width:15px;height:15px;background:#f2f2f3"></div><div class="a" style="left:940px;top:438px;width:15px;height:15px;background:#ececed"></div>
<div class="a" style="left:730px;top:468px;width:15px;height:15px;background:#e1e1e3"></div><div class="a" style="left:745px;top:468px;width:15px;height:15px;background:#e1e1e3"></div><div class="a" style="left:760px;top:468px;width:15px;height:15px;background:#dcdcde"></div><div class="a" style="left:775px;top:468px;width:15px;height:15px;background:#e1e1e3"></div><div class="a" style="left:790px;top:468px;width:15px;height:15px;background:#dcdcde"></div><div class="a" style="left:805px;top:468px;width:15px;height:15px;background:#e1e1e3"></div><div class="a" style="left:820px;top:468px;width:15px;height:15px;background:#e6e6e8"></div><div class="a" style="left:835px;top:468px;width:15px;height:15px;background:#d6d7d9"></div><div class="a" style="left:850px;top:468px;width:15px;height:15px;background:#e1e1e3"></div><div class="a" style="left:865px;top:468px;width:15px;height:15px;background:#e6e6e8"></div><div class="a" style="left:880px;top:468px;width:15px;height:15px;background:#f9fafa"></div>
<div class="a" style="left:730px;top:483px;width:15px;height:15px;background:#f9fafa"></div><div class="a" style="left:745px;top:483px;width:15px;height:15px;background:#f9fafa"></div><div class="a" style="left:760px;top:483px;width:15px;height:15px;background:#f2f2f3"></div><div class="a" style="left:775px;top:483px;width:15px;height:15px;background:#f9fafa"></div><div class="a" style="left:790px;top:483px;width:15px;height:15px;background:#f9fafa"></div><div class="a" style="left:805px;top:483px;width:15px;height:15px;background:#f9fafa"></div><div class="a" style="left:820px;top:483px;width:15px;height:15px;background:#f9fafa"></div><div class="a" style="left:835px;top:483px;width:15px;height:15px;background:#f9fafa"></div><div class="a" style="left:850px;top:483px;width:15px;height:15px;background:#f9fafa"></div><div class="a" style="left:865px;top:483px;width:15px;height:15px;background:#f9fafa"></div>
<div class="a" style="left:730px;top:513px;width:15px;height:15px;background:#e6e6e8"></div><div class="a" style="left:745px;top:513px;width:15px;height:15px;background:#dcdcde"></div><div class="a" style="left:760px;top:513px;width:15px;height:15px;background:#dcdcde"></div><div class="a" style="left:775px;top:513px;width:15px;height:15px;background:#d6d7d9"></div><div class="a" style="left:790px;top:513px;width:15px;height:15px;background:#e1e1e3"></div><div class="a" style="left:805px;top:513px;width:15px;height:15px;background:#dcdcde"></div><div class="a" style="left:820px;top:513px;width:15px;height:15px;background:#e1e1e3"></div><div class="a" style="left:835px;top:513px;width:15px;height:15px;background:#e1e1e3"></div><div class="a" style="left:850px;top:513px;width:15px;height:15px;background:#e1e1e3"></div><div class="a" style="left:865px;top:513px;width:15px;height:15px;background:#dcdcde"></div><div class="a" style="left:880px;top:513px;width:15px;height:15px;background:#e1e1e3"></div><div class="a" style="left:895px;top:513px;width:15px;height:15px;background:#d6d7d9"></div><div class="a" style="left:910px;top:513px;width:15px;height:15px;background:#e6e6e8"></div><div class="a" style="left:925px;top:513px;width:15px;height:15px;background:#dcdcde"></div><div class="a" style="left:940px;top:513px;width:15px;height:15px;background:#e6e6e8"></div><div class="a" style="left:955px;top:513px;width:15px;height:15px;background:#e1e1e3"></div><div class="a" style="left:970px;top:513px;width:15px;height:15px;background:#dcdcde"></div><div class="a" style="left:985px;top:513px;width:15px;height:15px;background:#dcdcde"></div><div class="a" style="left:1000px;top:513px;width:15px;height:15px;background:#dcdcde"></div><div class="a" style="left:1015px;top:513px;width:15px;height:15px;background:#e1e1e3"></div><div class="a" style="left:1030px;top:513px;width:15px;height:15px;background:#d6d7d9"></div><div class="a" style="left:1045px;top:513px;width:15px;height:15px;background:#dcdcde"></div><div class="a" style="left:1060px;top:513px;width:15px;height:15px;background:#e6e6e8"></div><div class="a" style="left:1075px;top:513px;width:15px;height:15px;background:#e1e1e3"></div><div class="a" style="left:1090px;top:513px;width:15px;height:15px;background:#dcdcde"></div><div class="a" style="left:1105px;top:513px;width:15px;height:15px;background:#d6d7d9"></div><div class="a" style="left:1120px;top:513px;width:15px;height:15px;background:#dcdcde"></div><div class="a" style="left:1135px;top:513px;width:15px;height:15px;background:#e1e1e3"></div><div class="a" style="left:1150px;top:513px;width:15px;height:15px;background:#dcdcde"></div><div class="a" style="left:1165px;top:513px;width:15px;height:15px;background:#e1e1e3"></div><div class="a" style="left:1180px;top:513px;width:15px;height:15px;background:#e6e6e8"></div><div class="a" style="left:1195px;top:513px;width:15px;height:15px;background:#e1e1e3"></div><div class="a" style="left:1210px;top:513px;width:15px;height:15px;background:#dcdcde"></div><div class="a" style="left:1225px;top:513px;width:15px;height:15px;background:#d6d7d9"></div><div class="a" style="left:1240px;top:513px;width:15px;height:15px;background:#e1e1e3"></div><div class="a" style="left:1255px;top:513px;width:15px;height:15px;background:#dcdcde"></div>
<div class="a" style="left:730px;top:558px;width:15px;height:15px;background:#e6e6e8"></div><div class="a" style="left:745px;top:558px;width:15px;height:15px;background:#d6d7d9"></div><div class="a" style="left:760px;top:558px;width:15px;height:15px;background:#d6d7d9"></div><div class="a" style="left:775px;top:558px;width:15px;height:15px;background:#d6d7d9"></div><div class="a" style="left:790px;top:558px;width:15px;height:15px;background:#e1e1e3"></div><div class="a" style="left:805px;top:558px;width:15px;height:15px;background:#dcdcde"></div><div class="a" style="left:820px;top:558px;width:15px;height:15px;background:#e6e6e8"></div><div class="a" style="left:835px;top:558px;width:15px;height:15px;background:#d6d7d9"></div><div class="a" style="left:850px;top:558px;width:15px;height:15px;background:#e1e1e3"></div><div class="a" style="left:865px;top:558px;width:15px;height:15px;background:#d6d7d9"></div><div class="a" style="left:880px;top:558px;width:15px;height:15px;background:#e1e1e3"></div><div class="a" style="left:895px;top:558px;width:15px;height:15px;background:#dcdcde"></div><div class="a" style="left:910px;top:558px;width:15px;height:15px;background:#e1e1e3"></div><div class="a" style="left:925px;top:558px;width:15px;height:15px;background:#e6e6e8"></div><div class="a" style="left:940px;top:558px;width:15px;height:15px;background:#dcdcde"></div><div class="a" style="left:955px;top:558px;width:15px;height:15px;background:#f9fafa"></div>
<div class="a" style="left:730px;top:588px;width:15px;height:15px;background:#f2f2f3"></div><div class="a" style="left:745px;top:588px;width:15px;height:15px;background:#f2f2f3"></div><div class="a" style="left:760px;top:588px;width:15px;height:15px;background:#f2f2f3"></div><div class="a" style="left:775px;top:588px;width:15px;height:15px;background:#f2f2f3"></div><div class="a" style="left:790px;top:588px;width:15px;height:15px;background:#f2f2f3"></div><div class="a" style="left:805px;top:588px;width:15px;height:15px;background:#f9fafa"></div><div class="a" style="left:820px;top:588px;width:15px;height:15px;background:#f9fafa"></div><div class="a" style="left:835px;top:588px;width:15px;height:15px;background:#f9fafa"></div><div class="a" style="left:850px;top:588px;width:15px;height:15px;background:#f2f2f3"></div><div class="a" style="left:865px;top:588px;width:15px;height:15px;background:#f9fafa"></div><div class="a" style="left:880px;top:588px;width:15px;height:15px;background:#f9fafa"></div>
<div class="a" style="left:730px;top:603px;width:15px;height:15px;background:#e6e6e8"></div><div class="a" style="left:745px;top:603px;width:15px;height:15px;background:#e6e6e8"></div><div class="a" style="left:760px;top:603px;width:15px;height:15px;background:#e1e1e3"></div><div class="a" style="left:775px;top:603px;width:15px;height:15px;background:#e6e6e8"></div><div class="a" style="left:790px;top:603px;width:15px;height:15px;background:#e1e1e3"></div><div class="a" style="left:805px;top:603px;width:15px;height:15px;background:#e1e1e3"></div><div class="a" style="left:820px;top:603px;width:15px;height:15px;background:#ececed"></div><div class="a" style="left:835px;top:603px;width:15px;height:15px;background:#dcdcde"></div><div class="a" style="left:850px;top:603px;width:15px;height:15px;background:#e6e6e8"></div><div class="a" style="left:865px;top:603px;width:15px;height:15px;background:#e6e6e8"></div><div class="a" style="left:880px;top:603px;width:15px;height:15px;background:#f9fafa"></div>
<div class="a" style="left:730px;top:633px;width:15px;height:15px;background:#f2f2f3"></div><div class="a" style="left:745px;top:633px;width:15px;height:15px;background:#ececed"></div><div class="a" style="left:760px;top:633px;width:15px;height:15px;background:#ececed"></div><div class="a" style="left:775px;top:633px;width:15px;height:15px;background:#ececed"></div><div class="a" style="left:790px;top:633px;width:15px;height:15px;background:#ececed"></div><div class="a" style="left:805px;top:633px;width:15px;height:15px;background:#f2f2f3"></div><div class="a" style="left:820px;top:633px;width:15px;height:15px;background:#f2f2f3"></div><div class="a" style="left:835px;top:633px;width:15px;height:15px;background:#f2f2f3"></div><div class="a" style="left:850px;top:633px;width:15px;height:15px;background:#ececed"></div><div class="a" style="left:865px;top:633px;width:15px;height:15px;background:#ececed"></div><div class="a" style="left:880px;top:633px;width:15px;height:15px;background:#f9fafa"></div>
<div class="a" style="left:730px;top:648px;width:15px;height:15px;background:#e6e6e8"></div><div class="a" style="left:745px;top:648px;width:15px;height:15px;background:#e6e6e8"></div><div class="a" style="left:760px;top:648px;width:15px;height:15px;background:#e1e1e3"></div><div class="a" style="left:775px;top:648px;width:15px;height:15px;background:#e1e1e3"></div><div class="a" style="left:790px;top:648px;width:15px;height:15px;background:#e1e1e3"></div><div class="a" style="left:805px;top:648px;width:15px;height:15px;background:#e1e1e3"></div><div class="a" style="left:820px;top:648px;width:15px;height:15px;background:#ececed"></div><div class="a" style="left:835px;top:648px;width:15px;height:15px;background:#dcdcde"></div><div class="a" style="left:850px;top:648px;width:15px;height:15px;background:#e6e6e8"></div><div class="a" style="left:865px;top:648px;width:15px;height:15px;background:#ececed"></div><div class="a" style="left:880px;top:648px;width:15px;height:15px;background:#f9fafa"></div>
<div class="a" style="left:730px;top:768px;width:15px;height:15px;background:#dcdcde"></div><div class="a" style="left:745px;top:768px;width:15px;height:15px;background:#dcdcde"></div><div class="a" style="left:760px;top:768px;width:15px;height:15px;background:#d6d7d9"></div><div class="a" style="left:775px;top:768px;width:15px;height:15px;background:#d6d7d9"></div><div class="a" style="left:790px;top:768px;width:15px;height:15px;background:#d6d7d9"></div><div class="a" style="left:805px;top:768px;width:15px;height:15px;background:#dcdcde"></div><div class="a" style="left:820px;top:768px;width:15px;height:15px;background:#dcdcde"></div><div class="a" style="left:835px;top:768px;width:15px;height:15px;background:#d6d7d9"></div><div class="a" style="left:850px;top:768px;width:15px;height:15px;background:#d6d7d9"></div><div class="a" style="left:865px;top:768px;width:15px;height:15px;background:#e1e1e3"></div><div class="a" style="left:880px;top:768px;width:15px;height:15px;background:#f9fafa"></div>
<svg class="a" style="left:0;top:0" width="1920" height="1032" viewBox="0 0 1920 1032"><path d="M632.7 315.6 L632.7 319.8 L196 315.2 L196 310.8 Z" fill="#ee3a3d"/><path d="M176 312.6 L199.5 305 Q194.5 312.8 199.5 321 Z" fill="#ee3a3d"/></svg>
</body></html>
